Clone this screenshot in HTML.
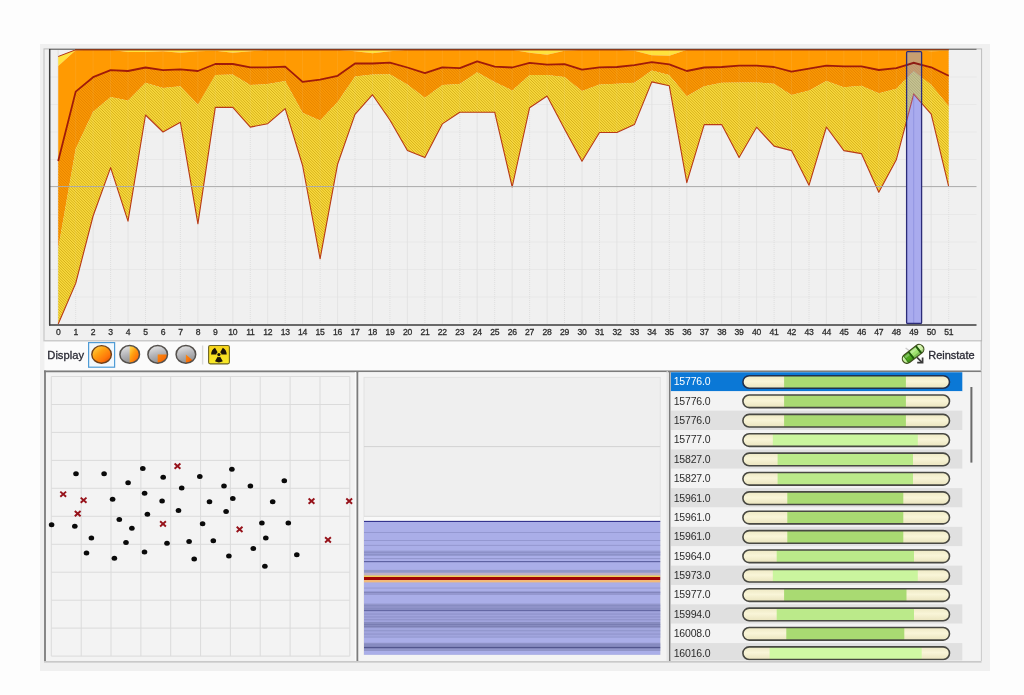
<!DOCTYPE html>
<html><head><meta charset="utf-8"><title>chart</title>
<style>
html,body{margin:0;padding:0;background:#fdfdfd;}
body{width:1024px;height:695px;overflow:hidden;position:relative;font-family:"Liberation Sans",sans-serif;}
svg{position:absolute;left:0;top:0;filter:blur(0.45px);}
text{font-family:"Liberation Sans",sans-serif;}
</style></head><body>
<svg width="1024" height="695" viewBox="0 0 1024 695">
<defs>
<pattern id="hy" width="2.4" height="2.4" patternUnits="userSpaceOnUse" patternTransform="rotate(-45)">
<rect width="2.4" height="2.4" fill="#f9de3a"/><rect width="1.15" height="2.4" fill="#d6b81e"/></pattern>
<pattern id="ho" width="2.4" height="2.4" patternUnits="userSpaceOnUse" patternTransform="rotate(-45)">
<rect width="2.4" height="2.4" fill="#fb9802"/><rect width="1.15" height="2.4" fill="#dc7a00"/></pattern>
<linearGradient id="gO" x1="0.1" y1="0.05" x2="0.9" y2="0.95"><stop offset="0" stop-color="#ffd44c"/><stop offset="0.38" stop-color="#ffa010"/><stop offset="0.72" stop-color="#ff780a"/><stop offset="1" stop-color="#e24c00"/></linearGradient>
<linearGradient id="gW" x1="0" y1="0" x2="1" y2="1"><stop offset="0" stop-color="#ff8a10"/><stop offset="1" stop-color="#f05a00"/></linearGradient>
<linearGradient id="gG" x1="0.3" y1="0" x2="0.6" y2="1"><stop offset="0" stop-color="#e6e6e6"/><stop offset="0.5" stop-color="#b4b4b8"/><stop offset="1" stop-color="#8c8c8c"/></linearGradient>
<linearGradient id="gP" x1="0" y1="0" x2="0" y2="1"><stop offset="0" stop-color="#eee9c4"/><stop offset="0.45" stop-color="#f9f5d8"/><stop offset="1" stop-color="#eae4be"/></linearGradient>
<linearGradient id="gY" x1="0" y1="0" x2="0" y2="1"><stop offset="0" stop-color="#f6d21a"/><stop offset="1" stop-color="#f8ea28"/></linearGradient>
<linearGradient id="gC" x1="0" y1="0" x2="0" y2="1"><stop offset="0" stop-color="#4f9a1e"/><stop offset="0.35" stop-color="#b6ec84"/><stop offset="0.6" stop-color="#58b01c"/><stop offset="1" stop-color="#3c8a10"/></linearGradient>
<clipPath id="cp"><rect x="50.3" y="50" width="926.5" height="274.4"/></clipPath><clipPath id="cb"><rect x="906.6" y="51.6" width="15" height="271.9"/></clipPath>
</defs>

<rect x="40" y="44" width="950" height="627" fill="#f0f0f0"/>
<rect x="44" y="48.9" width="937.6" height="292" fill="#f0f0f0" stroke="#bdbdbd" stroke-width="1"/>
<g><line x1="50" y1="77.0" x2="976.5" y2="77.0" stroke="#e6e6e6" stroke-width="0.9"/><line x1="50" y1="104.5" x2="976.5" y2="104.5" stroke="#e6e6e6" stroke-width="0.9"/><line x1="50" y1="132.0" x2="976.5" y2="132.0" stroke="#e6e6e6" stroke-width="0.9"/><line x1="50" y1="159.5" x2="976.5" y2="159.5" stroke="#e6e6e6" stroke-width="0.9"/><line x1="50" y1="214.5" x2="976.5" y2="214.5" stroke="#e6e6e6" stroke-width="0.9"/><line x1="50" y1="242.0" x2="976.5" y2="242.0" stroke="#e6e6e6" stroke-width="0.9"/><line x1="50" y1="269.5" x2="976.5" y2="269.5" stroke="#e6e6e6" stroke-width="0.9"/><line x1="50" y1="297.0" x2="976.5" y2="297.0" stroke="#e6e6e6" stroke-width="0.9"/><line x1="58.2" y1="50" x2="58.2" y2="324" stroke="#e0e0e0" stroke-width="0.8"/><line x1="75.7" y1="50" x2="75.7" y2="324" stroke="#d9d9d9" stroke-width="0.8" stroke-dasharray="1 1"/><line x1="93.1" y1="50" x2="93.1" y2="324" stroke="#e0e0e0" stroke-width="0.8"/><line x1="110.6" y1="50" x2="110.6" y2="324" stroke="#d9d9d9" stroke-width="0.8" stroke-dasharray="1 1"/><line x1="128.0" y1="50" x2="128.0" y2="324" stroke="#e0e0e0" stroke-width="0.8"/><line x1="145.5" y1="50" x2="145.5" y2="324" stroke="#d9d9d9" stroke-width="0.8" stroke-dasharray="1 1"/><line x1="163.0" y1="50" x2="163.0" y2="324" stroke="#e0e0e0" stroke-width="0.8"/><line x1="180.4" y1="50" x2="180.4" y2="324" stroke="#d9d9d9" stroke-width="0.8" stroke-dasharray="1 1"/><line x1="197.9" y1="50" x2="197.9" y2="324" stroke="#e0e0e0" stroke-width="0.8"/><line x1="215.3" y1="50" x2="215.3" y2="324" stroke="#d9d9d9" stroke-width="0.8" stroke-dasharray="1 1"/><line x1="232.8" y1="50" x2="232.8" y2="324" stroke="#e0e0e0" stroke-width="0.8"/><line x1="250.3" y1="50" x2="250.3" y2="324" stroke="#d9d9d9" stroke-width="0.8" stroke-dasharray="1 1"/><line x1="267.7" y1="50" x2="267.7" y2="324" stroke="#e0e0e0" stroke-width="0.8"/><line x1="285.2" y1="50" x2="285.2" y2="324" stroke="#d9d9d9" stroke-width="0.8" stroke-dasharray="1 1"/><line x1="302.6" y1="50" x2="302.6" y2="324" stroke="#e0e0e0" stroke-width="0.8"/><line x1="320.1" y1="50" x2="320.1" y2="324" stroke="#d9d9d9" stroke-width="0.8" stroke-dasharray="1 1"/><line x1="337.6" y1="50" x2="337.6" y2="324" stroke="#e0e0e0" stroke-width="0.8"/><line x1="355.0" y1="50" x2="355.0" y2="324" stroke="#d9d9d9" stroke-width="0.8" stroke-dasharray="1 1"/><line x1="372.5" y1="50" x2="372.5" y2="324" stroke="#e0e0e0" stroke-width="0.8"/><line x1="389.9" y1="50" x2="389.9" y2="324" stroke="#d9d9d9" stroke-width="0.8" stroke-dasharray="1 1"/><line x1="407.4" y1="50" x2="407.4" y2="324" stroke="#e0e0e0" stroke-width="0.8"/><line x1="424.9" y1="50" x2="424.9" y2="324" stroke="#d9d9d9" stroke-width="0.8" stroke-dasharray="1 1"/><line x1="442.3" y1="50" x2="442.3" y2="324" stroke="#e0e0e0" stroke-width="0.8"/><line x1="459.8" y1="50" x2="459.8" y2="324" stroke="#d9d9d9" stroke-width="0.8" stroke-dasharray="1 1"/><line x1="477.2" y1="50" x2="477.2" y2="324" stroke="#e0e0e0" stroke-width="0.8"/><line x1="494.7" y1="50" x2="494.7" y2="324" stroke="#d9d9d9" stroke-width="0.8" stroke-dasharray="1 1"/><line x1="512.2" y1="50" x2="512.2" y2="324" stroke="#e0e0e0" stroke-width="0.8"/><line x1="529.6" y1="50" x2="529.6" y2="324" stroke="#d9d9d9" stroke-width="0.8" stroke-dasharray="1 1"/><line x1="547.1" y1="50" x2="547.1" y2="324" stroke="#e0e0e0" stroke-width="0.8"/><line x1="564.5" y1="50" x2="564.5" y2="324" stroke="#d9d9d9" stroke-width="0.8" stroke-dasharray="1 1"/><line x1="582.0" y1="50" x2="582.0" y2="324" stroke="#e0e0e0" stroke-width="0.8"/><line x1="599.5" y1="50" x2="599.5" y2="324" stroke="#d9d9d9" stroke-width="0.8" stroke-dasharray="1 1"/><line x1="616.9" y1="50" x2="616.9" y2="324" stroke="#e0e0e0" stroke-width="0.8"/><line x1="634.4" y1="50" x2="634.4" y2="324" stroke="#d9d9d9" stroke-width="0.8" stroke-dasharray="1 1"/><line x1="651.8" y1="50" x2="651.8" y2="324" stroke="#e0e0e0" stroke-width="0.8"/><line x1="669.3" y1="50" x2="669.3" y2="324" stroke="#d9d9d9" stroke-width="0.8" stroke-dasharray="1 1"/><line x1="686.8" y1="50" x2="686.8" y2="324" stroke="#e0e0e0" stroke-width="0.8"/><line x1="704.2" y1="50" x2="704.2" y2="324" stroke="#d9d9d9" stroke-width="0.8" stroke-dasharray="1 1"/><line x1="721.7" y1="50" x2="721.7" y2="324" stroke="#e0e0e0" stroke-width="0.8"/><line x1="739.1" y1="50" x2="739.1" y2="324" stroke="#d9d9d9" stroke-width="0.8" stroke-dasharray="1 1"/><line x1="756.6" y1="50" x2="756.6" y2="324" stroke="#e0e0e0" stroke-width="0.8"/><line x1="774.1" y1="50" x2="774.1" y2="324" stroke="#d9d9d9" stroke-width="0.8" stroke-dasharray="1 1"/><line x1="791.5" y1="50" x2="791.5" y2="324" stroke="#e0e0e0" stroke-width="0.8"/><line x1="809.0" y1="50" x2="809.0" y2="324" stroke="#d9d9d9" stroke-width="0.8" stroke-dasharray="1 1"/><line x1="826.4" y1="50" x2="826.4" y2="324" stroke="#e0e0e0" stroke-width="0.8"/><line x1="843.9" y1="50" x2="843.9" y2="324" stroke="#d9d9d9" stroke-width="0.8" stroke-dasharray="1 1"/><line x1="861.4" y1="50" x2="861.4" y2="324" stroke="#e0e0e0" stroke-width="0.8"/><line x1="878.8" y1="50" x2="878.8" y2="324" stroke="#d9d9d9" stroke-width="0.8" stroke-dasharray="1 1"/><line x1="896.3" y1="50" x2="896.3" y2="324" stroke="#e0e0e0" stroke-width="0.8"/><line x1="913.7" y1="50" x2="913.7" y2="324" stroke="#d9d9d9" stroke-width="0.8" stroke-dasharray="1 1"/><line x1="931.2" y1="50" x2="931.2" y2="324" stroke="#e0e0e0" stroke-width="0.8"/><line x1="948.7" y1="50" x2="948.7" y2="324" stroke="#d9d9d9" stroke-width="0.8" stroke-dasharray="1 1"/></g>
<g clip-path="url(#cp)">
<polygon points="58.2,56.5 75.7,49.8 93.1,49.8 110.6,49.8 128.0,49.8 145.5,49.8 163.0,49.8 180.4,49.8 197.9,49.8 215.3,49.8 232.8,49.8 250.3,49.8 267.7,49.8 285.2,49.8 302.6,49.8 320.1,49.8 337.6,49.8 355.0,49.8 372.5,49.8 389.9,49.8 407.4,49.8 424.9,49.8 442.3,49.8 459.8,49.8 477.2,49.8 494.7,49.8 512.2,49.8 529.6,49.8 547.1,49.8 564.5,49.8 582.0,49.8 599.5,49.8 616.9,49.8 634.4,49.8 651.8,49.8 669.3,49.8 686.8,49.8 704.2,49.8 721.7,49.8 739.1,49.8 756.6,49.8 774.1,49.8 791.5,49.8 809.0,49.8 826.4,49.8 843.9,49.8 861.4,49.8 878.8,49.8 896.3,49.8 913.7,49.8 931.2,49.8 948.7,49.8 948.7,50.8 931.2,51.2 913.7,50.3 896.3,49.8 878.8,49.8 861.4,49.8 843.9,49.8 826.4,49.8 809.0,49.8 791.5,49.8 774.1,49.8 756.6,49.8 739.1,49.8 721.7,49.8 704.2,49.8 686.8,49.8 669.3,55.8 651.8,55.3 634.4,50.8 616.9,49.8 599.5,49.8 582.0,49.8 564.5,50.8 547.1,54.8 529.6,52.8 512.2,49.8 494.7,49.8 477.2,49.8 459.8,49.8 442.3,49.8 424.9,49.8 407.4,49.8 389.9,51.3 372.5,53.3 355.0,51.3 337.6,49.8 320.1,49.8 302.6,49.8 285.2,49.8 267.7,49.8 250.3,51.3 232.8,52.8 215.3,50.8 197.9,51.3 180.4,52.8 163.0,51.3 145.5,52.1 128.0,52.1 110.6,49.8 93.1,49.8 75.7,50.2 58.2,66.0" fill="#ffe23c"/>
<polygon points="58.2,66.0 75.7,50.2 93.1,49.8 110.6,49.8 128.0,52.1 145.5,52.1 163.0,51.3 180.4,52.8 197.9,51.3 215.3,50.8 232.8,52.8 250.3,51.3 267.7,49.8 285.2,49.8 302.6,49.8 320.1,49.8 337.6,49.8 355.0,51.3 372.5,53.3 389.9,51.3 407.4,49.8 424.9,49.8 442.3,49.8 459.8,49.8 477.2,49.8 494.7,49.8 512.2,49.8 529.6,52.8 547.1,54.8 564.5,50.8 582.0,49.8 599.5,49.8 616.9,49.8 634.4,50.8 651.8,55.3 669.3,55.8 686.8,49.8 704.2,49.8 721.7,49.8 739.1,49.8 756.6,49.8 774.1,49.8 791.5,49.8 809.0,49.8 826.4,49.8 843.9,49.8 861.4,49.8 878.8,49.8 896.3,49.8 913.7,50.3 931.2,51.2 948.7,50.8 948.7,75.8 931.2,67.3 913.7,62.8 896.3,68.2 878.8,70.0 861.4,66.4 843.9,66.4 826.4,65.7 809.0,68.7 791.5,71.7 774.1,67.0 756.6,65.7 739.1,65.7 721.7,67.0 704.2,67.5 686.8,71.0 669.3,64.3 651.8,62.2 634.4,65.2 616.9,67.0 599.5,67.3 582.0,69.6 564.5,64.2 547.1,64.7 529.6,62.9 512.2,67.5 494.7,66.6 477.2,61.3 459.8,68.2 442.3,67.3 424.9,73.1 407.4,67.5 389.9,62.6 372.5,63.5 355.0,63.5 337.6,75.8 320.1,79.6 302.6,81.9 285.2,66.6 267.7,67.3 250.3,67.3 232.8,64.0 215.3,64.0 197.9,71.0 180.4,69.3 163.0,70.1 145.5,67.5 128.0,71.0 110.6,70.1 93.1,77.2 75.7,91.6 58.2,161.0" fill="#ff9a02"/>
<polygon points="58.2,161.0 75.7,91.6 93.1,77.2 110.6,70.1 128.0,71.0 145.5,67.5 163.0,70.1 180.4,69.3 197.9,71.0 215.3,64.0 232.8,64.0 250.3,67.3 267.7,67.3 285.2,66.6 302.6,81.9 320.1,79.6 337.6,75.8 355.0,63.5 372.5,63.5 389.9,62.6 407.4,67.5 424.9,73.1 442.3,67.3 459.8,68.2 477.2,61.3 494.7,66.6 512.2,67.5 529.6,62.9 547.1,64.7 564.5,64.2 582.0,69.6 599.5,67.3 616.9,67.0 634.4,65.2 651.8,62.2 669.3,64.3 686.8,71.0 704.2,67.5 721.7,67.0 739.1,65.7 756.6,65.7 774.1,67.0 791.5,71.7 809.0,68.7 826.4,65.7 843.9,66.4 861.4,66.4 878.8,70.0 896.3,68.2 913.7,62.8 931.2,67.3 948.7,75.8 948.7,106.3 931.2,84.7 913.7,71.3 896.3,88.7 878.8,93.3 861.4,85.8 843.9,87.2 826.4,81.0 809.0,90.4 791.5,95.1 774.1,83.7 756.6,82.4 739.1,82.4 721.7,82.8 704.2,86.3 686.8,96.3 669.3,74.9 651.8,70.5 634.4,82.8 616.9,83.7 599.5,84.5 582.0,91.1 564.5,76.9 547.1,74.9 529.6,74.9 512.2,90.4 494.7,81.9 477.2,72.2 459.8,84.0 442.3,85.1 424.9,97.7 407.4,84.5 389.9,74.2 372.5,74.5 355.0,76.6 337.6,102.1 320.1,120.6 302.6,112.7 285.2,81.0 267.7,84.0 250.3,85.1 232.8,74.5 215.3,74.9 197.9,104.8 180.4,86.3 163.0,88.1 145.5,82.8 128.0,100.4 110.6,96.9 93.1,111.8 75.7,148.7 58.2,248.4" fill="#fb9904"/>
<polygon points="58.2,248.4 75.7,148.7 93.1,111.8 110.6,96.9 128.0,100.4 145.5,82.8 163.0,88.1 180.4,86.3 197.9,104.8 215.3,74.9 232.8,74.5 250.3,85.1 267.7,84.0 285.2,81.0 302.6,112.7 320.1,120.6 337.6,102.1 355.0,76.6 372.5,74.5 389.9,74.2 407.4,84.5 424.9,97.7 442.3,85.1 459.8,84.0 477.2,72.2 494.7,81.9 512.2,90.4 529.6,74.9 547.1,74.9 564.5,76.9 582.0,91.1 599.5,84.5 616.9,83.7 634.4,82.8 651.8,70.5 669.3,74.9 686.8,96.3 704.2,86.3 721.7,82.8 739.1,82.4 756.6,82.4 774.1,83.7 791.5,95.1 809.0,90.4 826.4,81.0 843.9,87.2 861.4,85.8 878.8,93.3 896.3,88.7 913.7,71.3 931.2,84.7 948.7,106.3 948.7,186.6 931.2,114.1 913.7,94.1 896.3,159.8 878.8,192.3 861.4,153.6 843.9,150.6 826.4,127.0 809.0,185.3 791.5,150.6 774.1,146.1 756.6,127.2 739.1,157.5 721.7,124.6 704.2,124.6 686.8,182.6 669.3,85.8 651.8,81.9 634.4,124.6 616.9,132.5 599.5,132.5 582.0,161.3 564.5,129.0 547.1,96.0 529.6,107.7 512.2,187.0 494.7,112.2 477.2,112.2 459.8,112.2 442.3,123.9 424.9,157.6 407.4,150.4 389.9,120.0 372.5,94.7 355.0,114.4 337.6,164.2 320.1,258.8 302.6,165.5 285.2,108.6 267.7,123.7 250.3,127.1 232.8,107.4 215.3,107.4 197.9,223.8 180.4,122.3 163.0,132.0 145.5,115.0 128.0,221.2 110.6,167.6 93.1,216.0 75.7,283.4 58.2,324.0" fill="#f9da3e"/>
<clipPath id="cy"><polygon points="58.2,248.4 75.7,148.7 93.1,111.8 110.6,96.9 128.0,100.4 145.5,82.8 163.0,88.1 180.4,86.3 197.9,104.8 215.3,74.9 232.8,74.5 250.3,85.1 267.7,84.0 285.2,81.0 302.6,112.7 320.1,120.6 337.6,102.1 355.0,76.6 372.5,74.5 389.9,74.2 407.4,84.5 424.9,97.7 442.3,85.1 459.8,84.0 477.2,72.2 494.7,81.9 512.2,90.4 529.6,74.9 547.1,74.9 564.5,76.9 582.0,91.1 599.5,84.5 616.9,83.7 634.4,82.8 651.8,70.5 669.3,74.9 686.8,96.3 704.2,86.3 721.7,82.8 739.1,82.4 756.6,82.4 774.1,83.7 791.5,95.1 809.0,90.4 826.4,81.0 843.9,87.2 861.4,85.8 878.8,93.3 896.3,88.7 913.7,71.3 931.2,84.7 948.7,106.3 948.7,186.6 931.2,114.1 913.7,94.1 896.3,159.8 878.8,192.3 861.4,153.6 843.9,150.6 826.4,127.0 809.0,185.3 791.5,150.6 774.1,146.1 756.6,127.2 739.1,157.5 721.7,124.6 704.2,124.6 686.8,182.6 669.3,85.8 651.8,81.9 634.4,124.6 616.9,132.5 599.5,132.5 582.0,161.3 564.5,129.0 547.1,96.0 529.6,107.7 512.2,187.0 494.7,112.2 477.2,112.2 459.8,112.2 442.3,123.9 424.9,157.6 407.4,150.4 389.9,120.0 372.5,94.7 355.0,114.4 337.6,164.2 320.1,258.8 302.6,165.5 285.2,108.6 267.7,123.7 250.3,127.1 232.8,107.4 215.3,107.4 197.9,223.8 180.4,122.3 163.0,132.0 145.5,115.0 128.0,221.2 110.6,167.6 93.1,216.0 75.7,283.4 58.2,324.0"/></clipPath><clipPath id="co"><polygon points="58.2,161.0 75.7,91.6 93.1,77.2 110.6,70.1 128.0,71.0 145.5,67.5 163.0,70.1 180.4,69.3 197.9,71.0 215.3,64.0 232.8,64.0 250.3,67.3 267.7,67.3 285.2,66.6 302.6,81.9 320.1,79.6 337.6,75.8 355.0,63.5 372.5,63.5 389.9,62.6 407.4,67.5 424.9,73.1 442.3,67.3 459.8,68.2 477.2,61.3 494.7,66.6 512.2,67.5 529.6,62.9 547.1,64.7 564.5,64.2 582.0,69.6 599.5,67.3 616.9,67.0 634.4,65.2 651.8,62.2 669.3,64.3 686.8,71.0 704.2,67.5 721.7,67.0 739.1,65.7 756.6,65.7 774.1,67.0 791.5,71.7 809.0,68.7 826.4,65.7 843.9,66.4 861.4,66.4 878.8,70.0 896.3,68.2 913.7,62.8 931.2,67.3 948.7,75.8 948.7,106.3 931.2,84.7 913.7,71.3 896.3,88.7 878.8,93.3 861.4,85.8 843.9,87.2 826.4,81.0 809.0,90.4 791.5,95.1 774.1,83.7 756.6,82.4 739.1,82.4 721.7,82.8 704.2,86.3 686.8,96.3 669.3,74.9 651.8,70.5 634.4,82.8 616.9,83.7 599.5,84.5 582.0,91.1 564.5,76.9 547.1,74.9 529.6,74.9 512.2,90.4 494.7,81.9 477.2,72.2 459.8,84.0 442.3,85.1 424.9,97.7 407.4,84.5 389.9,74.2 372.5,74.5 355.0,76.6 337.6,102.1 320.1,120.6 302.6,112.7 285.2,81.0 267.7,84.0 250.3,85.1 232.8,74.5 215.3,74.9 197.9,104.8 180.4,86.3 163.0,88.1 145.5,82.8 128.0,100.4 110.6,96.9 93.1,111.8 75.7,148.7 58.2,248.4"/></clipPath><path d="M-230.00 48l280 280M-227.30 48l280 280M-224.60 48l280 280M-221.90 48l280 280M-219.20 48l280 280M-216.50 48l280 280M-213.80 48l280 280M-211.10 48l280 280M-208.40 48l280 280M-205.70 48l280 280M-203.00 48l280 280M-200.30 48l280 280M-197.60 48l280 280M-194.90 48l280 280M-192.20 48l280 280M-189.50 48l280 280M-186.80 48l280 280M-184.10 48l280 280M-181.40 48l280 280M-178.70 48l280 280M-176.00 48l280 280M-173.30 48l280 280M-170.60 48l280 280M-167.90 48l280 280M-165.20 48l280 280M-162.50 48l280 280M-159.80 48l280 280M-157.10 48l280 280M-154.40 48l280 280M-151.70 48l280 280M-149.00 48l280 280M-146.30 48l280 280M-143.60 48l280 280M-140.90 48l280 280M-138.20 48l280 280M-135.50 48l280 280M-132.80 48l280 280M-130.10 48l280 280M-127.40 48l280 280M-124.70 48l280 280M-122.00 48l280 280M-119.30 48l280 280M-116.60 48l280 280M-113.90 48l280 280M-111.20 48l280 280M-108.50 48l280 280M-105.80 48l280 280M-103.10 48l280 280M-100.40 48l280 280M-97.70 48l280 280M-95.00 48l280 280M-92.30 48l280 280M-89.60 48l280 280M-86.90 48l280 280M-84.20 48l280 280M-81.50 48l280 280M-78.80 48l280 280M-76.10 48l280 280M-73.40 48l280 280M-70.70 48l280 280M-68.00 48l280 280M-65.30 48l280 280M-62.60 48l280 280M-59.90 48l280 280M-57.20 48l280 280M-54.50 48l280 280M-51.80 48l280 280M-49.10 48l280 280M-46.40 48l280 280M-43.70 48l280 280M-41.00 48l280 280M-38.30 48l280 280M-35.60 48l280 280M-32.90 48l280 280M-30.20 48l280 280M-27.50 48l280 280M-24.80 48l280 280M-22.10 48l280 280M-19.40 48l280 280M-16.70 48l280 280M-14.00 48l280 280M-11.30 48l280 280M-8.60 48l280 280M-5.90 48l280 280M-3.20 48l280 280M-0.50 48l280 280M2.20 48l280 280M4.90 48l280 280M7.60 48l280 280M10.30 48l280 280M13.00 48l280 280M15.70 48l280 280M18.40 48l280 280M21.10 48l280 280M23.80 48l280 280M26.50 48l280 280M29.20 48l280 280M31.90 48l280 280M34.60 48l280 280M37.30 48l280 280M40.00 48l280 280M42.70 48l280 280M45.40 48l280 280M48.10 48l280 280M50.80 48l280 280M53.50 48l280 280M56.20 48l280 280M58.90 48l280 280M61.60 48l280 280M64.30 48l280 280M67.00 48l280 280M69.70 48l280 280M72.40 48l280 280M75.10 48l280 280M77.80 48l280 280M80.50 48l280 280M83.20 48l280 280M85.90 48l280 280M88.60 48l280 280M91.30 48l280 280M94.00 48l280 280M96.70 48l280 280M99.40 48l280 280M102.10 48l280 280M104.80 48l280 280M107.50 48l280 280M110.20 48l280 280M112.90 48l280 280M115.60 48l280 280M118.30 48l280 280M121.00 48l280 280M123.70 48l280 280M126.40 48l280 280M129.10 48l280 280M131.80 48l280 280M134.50 48l280 280M137.20 48l280 280M139.90 48l280 280M142.60 48l280 280M145.30 48l280 280M148.00 48l280 280M150.70 48l280 280M153.40 48l280 280M156.10 48l280 280M158.80 48l280 280M161.50 48l280 280M164.20 48l280 280M166.90 48l280 280M169.60 48l280 280M172.30 48l280 280M175.00 48l280 280M177.70 48l280 280M180.40 48l280 280M183.10 48l280 280M185.80 48l280 280M188.50 48l280 280M191.20 48l280 280M193.90 48l280 280M196.60 48l280 280M199.30 48l280 280M202.00 48l280 280M204.70 48l280 280M207.40 48l280 280M210.10 48l280 280M212.80 48l280 280M215.50 48l280 280M218.20 48l280 280M220.90 48l280 280M223.60 48l280 280M226.30 48l280 280M229.00 48l280 280M231.70 48l280 280M234.40 48l280 280M237.10 48l280 280M239.80 48l280 280M242.50 48l280 280M245.20 48l280 280M247.90 48l280 280M250.60 48l280 280M253.30 48l280 280M256.00 48l280 280M258.70 48l280 280M261.40 48l280 280M264.10 48l280 280M266.80 48l280 280M269.50 48l280 280M272.20 48l280 280M274.90 48l280 280M277.60 48l280 280M280.30 48l280 280M283.00 48l280 280M285.70 48l280 280M288.40 48l280 280M291.10 48l280 280M293.80 48l280 280M296.50 48l280 280M299.20 48l280 280M301.90 48l280 280M304.60 48l280 280M307.30 48l280 280M310.00 48l280 280M312.70 48l280 280M315.40 48l280 280M318.10 48l280 280M320.80 48l280 280M323.50 48l280 280M326.20 48l280 280M328.90 48l280 280M331.60 48l280 280M334.30 48l280 280M337.00 48l280 280M339.70 48l280 280M342.40 48l280 280M345.10 48l280 280M347.80 48l280 280M350.50 48l280 280M353.20 48l280 280M355.90 48l280 280M358.60 48l280 280M361.30 48l280 280M364.00 48l280 280M366.70 48l280 280M369.40 48l280 280M372.10 48l280 280M374.80 48l280 280M377.50 48l280 280M380.20 48l280 280M382.90 48l280 280M385.60 48l280 280M388.30 48l280 280M391.00 48l280 280M393.70 48l280 280M396.40 48l280 280M399.10 48l280 280M401.80 48l280 280M404.50 48l280 280M407.20 48l280 280M409.90 48l280 280M412.60 48l280 280M415.30 48l280 280M418.00 48l280 280M420.70 48l280 280M423.40 48l280 280M426.10 48l280 280M428.80 48l280 280M431.50 48l280 280M434.20 48l280 280M436.90 48l280 280M439.60 48l280 280M442.30 48l280 280M445.00 48l280 280M447.70 48l280 280M450.40 48l280 280M453.10 48l280 280M455.80 48l280 280M458.50 48l280 280M461.20 48l280 280M463.90 48l280 280M466.60 48l280 280M469.30 48l280 280M472.00 48l280 280M474.70 48l280 280M477.40 48l280 280M480.10 48l280 280M482.80 48l280 280M485.50 48l280 280M488.20 48l280 280M490.90 48l280 280M493.60 48l280 280M496.30 48l280 280M499.00 48l280 280M501.70 48l280 280M504.40 48l280 280M507.10 48l280 280M509.80 48l280 280M512.50 48l280 280M515.20 48l280 280M517.90 48l280 280M520.60 48l280 280M523.30 48l280 280M526.00 48l280 280M528.70 48l280 280M531.40 48l280 280M534.10 48l280 280M536.80 48l280 280M539.50 48l280 280M542.20 48l280 280M544.90 48l280 280M547.60 48l280 280M550.30 48l280 280M553.00 48l280 280M555.70 48l280 280M558.40 48l280 280M561.10 48l280 280M563.80 48l280 280M566.50 48l280 280M569.20 48l280 280M571.90 48l280 280M574.60 48l280 280M577.30 48l280 280M580.00 48l280 280M582.70 48l280 280M585.40 48l280 280M588.10 48l280 280M590.80 48l280 280M593.50 48l280 280M596.20 48l280 280M598.90 48l280 280M601.60 48l280 280M604.30 48l280 280M607.00 48l280 280M609.70 48l280 280M612.40 48l280 280M615.10 48l280 280M617.80 48l280 280M620.50 48l280 280M623.20 48l280 280M625.90 48l280 280M628.60 48l280 280M631.30 48l280 280M634.00 48l280 280M636.70 48l280 280M639.40 48l280 280M642.10 48l280 280M644.80 48l280 280M647.50 48l280 280M650.20 48l280 280M652.90 48l280 280M655.60 48l280 280M658.30 48l280 280M661.00 48l280 280M663.70 48l280 280M666.40 48l280 280M669.10 48l280 280M671.80 48l280 280M674.50 48l280 280M677.20 48l280 280M679.90 48l280 280M682.60 48l280 280M685.30 48l280 280M688.00 48l280 280M690.70 48l280 280M693.40 48l280 280M696.10 48l280 280M698.80 48l280 280M701.50 48l280 280M704.20 48l280 280M706.90 48l280 280M709.60 48l280 280M712.30 48l280 280M715.00 48l280 280M717.70 48l280 280M720.40 48l280 280M723.10 48l280 280M725.80 48l280 280M728.50 48l280 280M731.20 48l280 280M733.90 48l280 280M736.60 48l280 280M739.30 48l280 280M742.00 48l280 280M744.70 48l280 280M747.40 48l280 280M750.10 48l280 280M752.80 48l280 280M755.50 48l280 280M758.20 48l280 280M760.90 48l280 280M763.60 48l280 280M766.30 48l280 280M769.00 48l280 280M771.70 48l280 280M774.40 48l280 280M777.10 48l280 280M779.80 48l280 280M782.50 48l280 280M785.20 48l280 280M787.90 48l280 280M790.60 48l280 280M793.30 48l280 280M796.00 48l280 280M798.70 48l280 280M801.40 48l280 280M804.10 48l280 280M806.80 48l280 280M809.50 48l280 280M812.20 48l280 280M814.90 48l280 280M817.60 48l280 280M820.30 48l280 280M823.00 48l280 280M825.70 48l280 280M828.40 48l280 280M831.10 48l280 280M833.80 48l280 280M836.50 48l280 280M839.20 48l280 280M841.90 48l280 280M844.60 48l280 280M847.30 48l280 280M850.00 48l280 280M852.70 48l280 280M855.40 48l280 280M858.10 48l280 280M860.80 48l280 280M863.50 48l280 280M866.20 48l280 280M868.90 48l280 280M871.60 48l280 280M874.30 48l280 280M877.00 48l280 280M879.70 48l280 280M882.40 48l280 280M885.10 48l280 280M887.80 48l280 280M890.50 48l280 280M893.20 48l280 280M895.90 48l280 280M898.60 48l280 280M901.30 48l280 280M904.00 48l280 280M906.70 48l280 280M909.40 48l280 280M912.10 48l280 280M914.80 48l280 280M917.50 48l280 280M920.20 48l280 280M922.90 48l280 280M925.60 48l280 280M928.30 48l280 280M931.00 48l280 280M933.70 48l280 280M936.40 48l280 280M939.10 48l280 280M941.80 48l280 280M944.50 48l280 280M947.20 48l280 280M949.90 48l280 280M952.60 48l280 280M955.30 48l280 280M958.00 48l280 280M960.70 48l280 280M963.40 48l280 280M966.10 48l280 280M968.80 48l280 280M971.50 48l280 280M974.20 48l280 280M976.90 48l280 280M979.60 48l280 280" stroke="#d4ae1a" stroke-width="1.0" fill="none" clip-path="url(#cy)"/><path d="M-230.00 48l280 280M-227.30 48l280 280M-224.60 48l280 280M-221.90 48l280 280M-219.20 48l280 280M-216.50 48l280 280M-213.80 48l280 280M-211.10 48l280 280M-208.40 48l280 280M-205.70 48l280 280M-203.00 48l280 280M-200.30 48l280 280M-197.60 48l280 280M-194.90 48l280 280M-192.20 48l280 280M-189.50 48l280 280M-186.80 48l280 280M-184.10 48l280 280M-181.40 48l280 280M-178.70 48l280 280M-176.00 48l280 280M-173.30 48l280 280M-170.60 48l280 280M-167.90 48l280 280M-165.20 48l280 280M-162.50 48l280 280M-159.80 48l280 280M-157.10 48l280 280M-154.40 48l280 280M-151.70 48l280 280M-149.00 48l280 280M-146.30 48l280 280M-143.60 48l280 280M-140.90 48l280 280M-138.20 48l280 280M-135.50 48l280 280M-132.80 48l280 280M-130.10 48l280 280M-127.40 48l280 280M-124.70 48l280 280M-122.00 48l280 280M-119.30 48l280 280M-116.60 48l280 280M-113.90 48l280 280M-111.20 48l280 280M-108.50 48l280 280M-105.80 48l280 280M-103.10 48l280 280M-100.40 48l280 280M-97.70 48l280 280M-95.00 48l280 280M-92.30 48l280 280M-89.60 48l280 280M-86.90 48l280 280M-84.20 48l280 280M-81.50 48l280 280M-78.80 48l280 280M-76.10 48l280 280M-73.40 48l280 280M-70.70 48l280 280M-68.00 48l280 280M-65.30 48l280 280M-62.60 48l280 280M-59.90 48l280 280M-57.20 48l280 280M-54.50 48l280 280M-51.80 48l280 280M-49.10 48l280 280M-46.40 48l280 280M-43.70 48l280 280M-41.00 48l280 280M-38.30 48l280 280M-35.60 48l280 280M-32.90 48l280 280M-30.20 48l280 280M-27.50 48l280 280M-24.80 48l280 280M-22.10 48l280 280M-19.40 48l280 280M-16.70 48l280 280M-14.00 48l280 280M-11.30 48l280 280M-8.60 48l280 280M-5.90 48l280 280M-3.20 48l280 280M-0.50 48l280 280M2.20 48l280 280M4.90 48l280 280M7.60 48l280 280M10.30 48l280 280M13.00 48l280 280M15.70 48l280 280M18.40 48l280 280M21.10 48l280 280M23.80 48l280 280M26.50 48l280 280M29.20 48l280 280M31.90 48l280 280M34.60 48l280 280M37.30 48l280 280M40.00 48l280 280M42.70 48l280 280M45.40 48l280 280M48.10 48l280 280M50.80 48l280 280M53.50 48l280 280M56.20 48l280 280M58.90 48l280 280M61.60 48l280 280M64.30 48l280 280M67.00 48l280 280M69.70 48l280 280M72.40 48l280 280M75.10 48l280 280M77.80 48l280 280M80.50 48l280 280M83.20 48l280 280M85.90 48l280 280M88.60 48l280 280M91.30 48l280 280M94.00 48l280 280M96.70 48l280 280M99.40 48l280 280M102.10 48l280 280M104.80 48l280 280M107.50 48l280 280M110.20 48l280 280M112.90 48l280 280M115.60 48l280 280M118.30 48l280 280M121.00 48l280 280M123.70 48l280 280M126.40 48l280 280M129.10 48l280 280M131.80 48l280 280M134.50 48l280 280M137.20 48l280 280M139.90 48l280 280M142.60 48l280 280M145.30 48l280 280M148.00 48l280 280M150.70 48l280 280M153.40 48l280 280M156.10 48l280 280M158.80 48l280 280M161.50 48l280 280M164.20 48l280 280M166.90 48l280 280M169.60 48l280 280M172.30 48l280 280M175.00 48l280 280M177.70 48l280 280M180.40 48l280 280M183.10 48l280 280M185.80 48l280 280M188.50 48l280 280M191.20 48l280 280M193.90 48l280 280M196.60 48l280 280M199.30 48l280 280M202.00 48l280 280M204.70 48l280 280M207.40 48l280 280M210.10 48l280 280M212.80 48l280 280M215.50 48l280 280M218.20 48l280 280M220.90 48l280 280M223.60 48l280 280M226.30 48l280 280M229.00 48l280 280M231.70 48l280 280M234.40 48l280 280M237.10 48l280 280M239.80 48l280 280M242.50 48l280 280M245.20 48l280 280M247.90 48l280 280M250.60 48l280 280M253.30 48l280 280M256.00 48l280 280M258.70 48l280 280M261.40 48l280 280M264.10 48l280 280M266.80 48l280 280M269.50 48l280 280M272.20 48l280 280M274.90 48l280 280M277.60 48l280 280M280.30 48l280 280M283.00 48l280 280M285.70 48l280 280M288.40 48l280 280M291.10 48l280 280M293.80 48l280 280M296.50 48l280 280M299.20 48l280 280M301.90 48l280 280M304.60 48l280 280M307.30 48l280 280M310.00 48l280 280M312.70 48l280 280M315.40 48l280 280M318.10 48l280 280M320.80 48l280 280M323.50 48l280 280M326.20 48l280 280M328.90 48l280 280M331.60 48l280 280M334.30 48l280 280M337.00 48l280 280M339.70 48l280 280M342.40 48l280 280M345.10 48l280 280M347.80 48l280 280M350.50 48l280 280M353.20 48l280 280M355.90 48l280 280M358.60 48l280 280M361.30 48l280 280M364.00 48l280 280M366.70 48l280 280M369.40 48l280 280M372.10 48l280 280M374.80 48l280 280M377.50 48l280 280M380.20 48l280 280M382.90 48l280 280M385.60 48l280 280M388.30 48l280 280M391.00 48l280 280M393.70 48l280 280M396.40 48l280 280M399.10 48l280 280M401.80 48l280 280M404.50 48l280 280M407.20 48l280 280M409.90 48l280 280M412.60 48l280 280M415.30 48l280 280M418.00 48l280 280M420.70 48l280 280M423.40 48l280 280M426.10 48l280 280M428.80 48l280 280M431.50 48l280 280M434.20 48l280 280M436.90 48l280 280M439.60 48l280 280M442.30 48l280 280M445.00 48l280 280M447.70 48l280 280M450.40 48l280 280M453.10 48l280 280M455.80 48l280 280M458.50 48l280 280M461.20 48l280 280M463.90 48l280 280M466.60 48l280 280M469.30 48l280 280M472.00 48l280 280M474.70 48l280 280M477.40 48l280 280M480.10 48l280 280M482.80 48l280 280M485.50 48l280 280M488.20 48l280 280M490.90 48l280 280M493.60 48l280 280M496.30 48l280 280M499.00 48l280 280M501.70 48l280 280M504.40 48l280 280M507.10 48l280 280M509.80 48l280 280M512.50 48l280 280M515.20 48l280 280M517.90 48l280 280M520.60 48l280 280M523.30 48l280 280M526.00 48l280 280M528.70 48l280 280M531.40 48l280 280M534.10 48l280 280M536.80 48l280 280M539.50 48l280 280M542.20 48l280 280M544.90 48l280 280M547.60 48l280 280M550.30 48l280 280M553.00 48l280 280M555.70 48l280 280M558.40 48l280 280M561.10 48l280 280M563.80 48l280 280M566.50 48l280 280M569.20 48l280 280M571.90 48l280 280M574.60 48l280 280M577.30 48l280 280M580.00 48l280 280M582.70 48l280 280M585.40 48l280 280M588.10 48l280 280M590.80 48l280 280M593.50 48l280 280M596.20 48l280 280M598.90 48l280 280M601.60 48l280 280M604.30 48l280 280M607.00 48l280 280M609.70 48l280 280M612.40 48l280 280M615.10 48l280 280M617.80 48l280 280M620.50 48l280 280M623.20 48l280 280M625.90 48l280 280M628.60 48l280 280M631.30 48l280 280M634.00 48l280 280M636.70 48l280 280M639.40 48l280 280M642.10 48l280 280M644.80 48l280 280M647.50 48l280 280M650.20 48l280 280M652.90 48l280 280M655.60 48l280 280M658.30 48l280 280M661.00 48l280 280M663.70 48l280 280M666.40 48l280 280M669.10 48l280 280M671.80 48l280 280M674.50 48l280 280M677.20 48l280 280M679.90 48l280 280M682.60 48l280 280M685.30 48l280 280M688.00 48l280 280M690.70 48l280 280M693.40 48l280 280M696.10 48l280 280M698.80 48l280 280M701.50 48l280 280M704.20 48l280 280M706.90 48l280 280M709.60 48l280 280M712.30 48l280 280M715.00 48l280 280M717.70 48l280 280M720.40 48l280 280M723.10 48l280 280M725.80 48l280 280M728.50 48l280 280M731.20 48l280 280M733.90 48l280 280M736.60 48l280 280M739.30 48l280 280M742.00 48l280 280M744.70 48l280 280M747.40 48l280 280M750.10 48l280 280M752.80 48l280 280M755.50 48l280 280M758.20 48l280 280M760.90 48l280 280M763.60 48l280 280M766.30 48l280 280M769.00 48l280 280M771.70 48l280 280M774.40 48l280 280M777.10 48l280 280M779.80 48l280 280M782.50 48l280 280M785.20 48l280 280M787.90 48l280 280M790.60 48l280 280M793.30 48l280 280M796.00 48l280 280M798.70 48l280 280M801.40 48l280 280M804.10 48l280 280M806.80 48l280 280M809.50 48l280 280M812.20 48l280 280M814.90 48l280 280M817.60 48l280 280M820.30 48l280 280M823.00 48l280 280M825.70 48l280 280M828.40 48l280 280M831.10 48l280 280M833.80 48l280 280M836.50 48l280 280M839.20 48l280 280M841.90 48l280 280M844.60 48l280 280M847.30 48l280 280M850.00 48l280 280M852.70 48l280 280M855.40 48l280 280M858.10 48l280 280M860.80 48l280 280M863.50 48l280 280M866.20 48l280 280M868.90 48l280 280M871.60 48l280 280M874.30 48l280 280M877.00 48l280 280M879.70 48l280 280M882.40 48l280 280M885.10 48l280 280M887.80 48l280 280M890.50 48l280 280M893.20 48l280 280M895.90 48l280 280M898.60 48l280 280M901.30 48l280 280M904.00 48l280 280M906.70 48l280 280M909.40 48l280 280M912.10 48l280 280M914.80 48l280 280M917.50 48l280 280M920.20 48l280 280M922.90 48l280 280M925.60 48l280 280M928.30 48l280 280M931.00 48l280 280M933.70 48l280 280M936.40 48l280 280M939.10 48l280 280M941.80 48l280 280M944.50 48l280 280M947.20 48l280 280M949.90 48l280 280M952.60 48l280 280M955.30 48l280 280M958.00 48l280 280M960.70 48l280 280M963.40 48l280 280M966.10 48l280 280M968.80 48l280 280M971.50 48l280 280M974.20 48l280 280M976.90 48l280 280M979.60 48l280 280" stroke="#e58200" stroke-width="1.0" fill="none" clip-path="url(#co)"/>
<line x1="58.2" y1="50" x2="58.2" y2="324.0" stroke="#e8e0c8" stroke-opacity="0.10" stroke-width="1"/>
<line x1="75.7" y1="50" x2="75.7" y2="283.4" stroke="#e8e0c8" stroke-opacity="0.10" stroke-width="1"/>
<line x1="93.1" y1="50" x2="93.1" y2="216.0" stroke="#e8e0c8" stroke-opacity="0.10" stroke-width="1"/>
<line x1="110.6" y1="50" x2="110.6" y2="167.6" stroke="#e8e0c8" stroke-opacity="0.10" stroke-width="1"/>
<line x1="128.0" y1="50" x2="128.0" y2="221.2" stroke="#e8e0c8" stroke-opacity="0.10" stroke-width="1"/>
<line x1="145.5" y1="50" x2="145.5" y2="115.0" stroke="#e8e0c8" stroke-opacity="0.10" stroke-width="1"/>
<line x1="163.0" y1="50" x2="163.0" y2="132.0" stroke="#e8e0c8" stroke-opacity="0.10" stroke-width="1"/>
<line x1="180.4" y1="50" x2="180.4" y2="122.3" stroke="#e8e0c8" stroke-opacity="0.10" stroke-width="1"/>
<line x1="197.9" y1="50" x2="197.9" y2="223.8" stroke="#e8e0c8" stroke-opacity="0.10" stroke-width="1"/>
<line x1="215.3" y1="50" x2="215.3" y2="107.4" stroke="#e8e0c8" stroke-opacity="0.10" stroke-width="1"/>
<line x1="232.8" y1="50" x2="232.8" y2="107.4" stroke="#e8e0c8" stroke-opacity="0.10" stroke-width="1"/>
<line x1="250.3" y1="50" x2="250.3" y2="127.1" stroke="#e8e0c8" stroke-opacity="0.10" stroke-width="1"/>
<line x1="267.7" y1="50" x2="267.7" y2="123.7" stroke="#e8e0c8" stroke-opacity="0.10" stroke-width="1"/>
<line x1="285.2" y1="50" x2="285.2" y2="108.6" stroke="#e8e0c8" stroke-opacity="0.10" stroke-width="1"/>
<line x1="302.6" y1="50" x2="302.6" y2="165.5" stroke="#e8e0c8" stroke-opacity="0.10" stroke-width="1"/>
<line x1="320.1" y1="50" x2="320.1" y2="258.8" stroke="#e8e0c8" stroke-opacity="0.10" stroke-width="1"/>
<line x1="337.6" y1="50" x2="337.6" y2="164.2" stroke="#e8e0c8" stroke-opacity="0.10" stroke-width="1"/>
<line x1="355.0" y1="50" x2="355.0" y2="114.4" stroke="#e8e0c8" stroke-opacity="0.10" stroke-width="1"/>
<line x1="372.5" y1="50" x2="372.5" y2="94.7" stroke="#e8e0c8" stroke-opacity="0.10" stroke-width="1"/>
<line x1="389.9" y1="50" x2="389.9" y2="120.0" stroke="#e8e0c8" stroke-opacity="0.10" stroke-width="1"/>
<line x1="407.4" y1="50" x2="407.4" y2="150.4" stroke="#e8e0c8" stroke-opacity="0.10" stroke-width="1"/>
<line x1="424.9" y1="50" x2="424.9" y2="157.6" stroke="#e8e0c8" stroke-opacity="0.10" stroke-width="1"/>
<line x1="442.3" y1="50" x2="442.3" y2="123.9" stroke="#e8e0c8" stroke-opacity="0.10" stroke-width="1"/>
<line x1="459.8" y1="50" x2="459.8" y2="112.2" stroke="#e8e0c8" stroke-opacity="0.10" stroke-width="1"/>
<line x1="477.2" y1="50" x2="477.2" y2="112.2" stroke="#e8e0c8" stroke-opacity="0.10" stroke-width="1"/>
<line x1="494.7" y1="50" x2="494.7" y2="112.2" stroke="#e8e0c8" stroke-opacity="0.10" stroke-width="1"/>
<line x1="512.2" y1="50" x2="512.2" y2="187.0" stroke="#e8e0c8" stroke-opacity="0.10" stroke-width="1"/>
<line x1="529.6" y1="50" x2="529.6" y2="107.7" stroke="#e8e0c8" stroke-opacity="0.10" stroke-width="1"/>
<line x1="547.1" y1="50" x2="547.1" y2="96.0" stroke="#e8e0c8" stroke-opacity="0.10" stroke-width="1"/>
<line x1="564.5" y1="50" x2="564.5" y2="129.0" stroke="#e8e0c8" stroke-opacity="0.10" stroke-width="1"/>
<line x1="582.0" y1="50" x2="582.0" y2="161.3" stroke="#e8e0c8" stroke-opacity="0.10" stroke-width="1"/>
<line x1="599.5" y1="50" x2="599.5" y2="132.5" stroke="#e8e0c8" stroke-opacity="0.10" stroke-width="1"/>
<line x1="616.9" y1="50" x2="616.9" y2="132.5" stroke="#e8e0c8" stroke-opacity="0.10" stroke-width="1"/>
<line x1="634.4" y1="50" x2="634.4" y2="124.6" stroke="#e8e0c8" stroke-opacity="0.10" stroke-width="1"/>
<line x1="651.8" y1="50" x2="651.8" y2="81.9" stroke="#e8e0c8" stroke-opacity="0.10" stroke-width="1"/>
<line x1="669.3" y1="50" x2="669.3" y2="85.8" stroke="#e8e0c8" stroke-opacity="0.10" stroke-width="1"/>
<line x1="686.8" y1="50" x2="686.8" y2="182.6" stroke="#e8e0c8" stroke-opacity="0.10" stroke-width="1"/>
<line x1="704.2" y1="50" x2="704.2" y2="124.6" stroke="#e8e0c8" stroke-opacity="0.10" stroke-width="1"/>
<line x1="721.7" y1="50" x2="721.7" y2="124.6" stroke="#e8e0c8" stroke-opacity="0.10" stroke-width="1"/>
<line x1="739.1" y1="50" x2="739.1" y2="157.5" stroke="#e8e0c8" stroke-opacity="0.10" stroke-width="1"/>
<line x1="756.6" y1="50" x2="756.6" y2="127.2" stroke="#e8e0c8" stroke-opacity="0.10" stroke-width="1"/>
<line x1="774.1" y1="50" x2="774.1" y2="146.1" stroke="#e8e0c8" stroke-opacity="0.10" stroke-width="1"/>
<line x1="791.5" y1="50" x2="791.5" y2="150.6" stroke="#e8e0c8" stroke-opacity="0.10" stroke-width="1"/>
<line x1="809.0" y1="50" x2="809.0" y2="185.3" stroke="#e8e0c8" stroke-opacity="0.10" stroke-width="1"/>
<line x1="826.4" y1="50" x2="826.4" y2="127.0" stroke="#e8e0c8" stroke-opacity="0.10" stroke-width="1"/>
<line x1="843.9" y1="50" x2="843.9" y2="150.6" stroke="#e8e0c8" stroke-opacity="0.10" stroke-width="1"/>
<line x1="861.4" y1="50" x2="861.4" y2="153.6" stroke="#e8e0c8" stroke-opacity="0.10" stroke-width="1"/>
<line x1="878.8" y1="50" x2="878.8" y2="192.3" stroke="#e8e0c8" stroke-opacity="0.10" stroke-width="1"/>
<line x1="896.3" y1="50" x2="896.3" y2="159.8" stroke="#e8e0c8" stroke-opacity="0.10" stroke-width="1"/>
<line x1="913.7" y1="50" x2="913.7" y2="94.1" stroke="#e8e0c8" stroke-opacity="0.10" stroke-width="1"/>
<line x1="931.2" y1="50" x2="931.2" y2="114.1" stroke="#e8e0c8" stroke-opacity="0.10" stroke-width="1"/>
<line x1="948.7" y1="50" x2="948.7" y2="186.6" stroke="#e8e0c8" stroke-opacity="0.10" stroke-width="1"/>
<polyline points="58.2,324.0 75.7,283.4 93.1,216.0 110.6,167.6 128.0,221.2 145.5,115.0 163.0,132.0 180.4,122.3 197.9,223.8 215.3,107.4 232.8,107.4 250.3,127.1 267.7,123.7 285.2,108.6 302.6,165.5 320.1,258.8 337.6,164.2 355.0,114.4 372.5,94.7 389.9,120.0 407.4,150.4 424.9,157.6 442.3,123.9 459.8,112.2 477.2,112.2 494.7,112.2 512.2,187.0 529.6,107.7 547.1,96.0 564.5,129.0 582.0,161.3 599.5,132.5 616.9,132.5 634.4,124.6 651.8,81.9 669.3,85.8 686.8,182.6 704.2,124.6 721.7,124.6 739.1,157.5 756.6,127.2 774.1,146.1 791.5,150.6 809.0,185.3 826.4,127.0 843.9,150.6 861.4,153.6 878.8,192.3 896.3,159.8 913.7,94.1 931.2,114.1 948.7,186.6" fill="none" stroke="#b83a18" stroke-width="1.1" stroke-linejoin="round"/>
<polyline points="58.2,56.5 75.7,49.8 93.1,49.8 110.6,49.8 128.0,49.8 145.5,49.8 163.0,49.8 180.4,49.8 197.9,49.8 215.3,49.8 232.8,49.8 250.3,49.8 267.7,49.8 285.2,49.8 302.6,49.8 320.1,49.8 337.6,49.8 355.0,49.8 372.5,49.8 389.9,49.8 407.4,49.8 424.9,49.8 442.3,49.8 459.8,49.8 477.2,49.8 494.7,49.8 512.2,49.8 529.6,49.8 547.1,49.8 564.5,49.8 582.0,49.8 599.5,49.8 616.9,49.8 634.4,49.8 651.8,49.8 669.3,49.8 686.8,49.8 704.2,49.8 721.7,49.8 739.1,49.8 756.6,49.8 774.1,49.8 791.5,49.8 809.0,49.8 826.4,49.8 843.9,49.8 861.4,49.8 878.8,49.8 896.3,49.8 913.7,49.8 931.2,49.8 948.7,49.8" fill="none" stroke="#b23414" stroke-width="1" stroke-linejoin="round"/>
<polyline points="58.2,161.0 75.7,91.6 93.1,77.2 110.6,70.1 128.0,71.0 145.5,67.5 163.0,70.1 180.4,69.3 197.9,71.0 215.3,64.0 232.8,64.0 250.3,67.3 267.7,67.3 285.2,66.6 302.6,81.9 320.1,79.6 337.6,75.8 355.0,63.5 372.5,63.5 389.9,62.6 407.4,67.5 424.9,73.1 442.3,67.3 459.8,68.2 477.2,61.3 494.7,66.6 512.2,67.5 529.6,62.9 547.1,64.7 564.5,64.2 582.0,69.6 599.5,67.3 616.9,67.0 634.4,65.2 651.8,62.2 669.3,64.3 686.8,71.0 704.2,67.5 721.7,67.0 739.1,65.7 756.6,65.7 774.1,67.0 791.5,71.7 809.0,68.7 826.4,65.7 843.9,66.4 861.4,66.4 878.8,70.0 896.3,68.2 913.7,62.8 931.2,67.3 948.7,75.8" fill="none" stroke="#a01a0a" stroke-width="1.8" stroke-linejoin="round"/>
</g>
<line x1="50" y1="186.6" x2="976.5" y2="186.6" stroke="#ababab" stroke-width="1"/>
<clipPath id="cf"><polygon points="58.2,56.5 75.7,49.8 93.1,49.8 110.6,49.8 128.0,49.8 145.5,49.8 163.0,49.8 180.4,49.8 197.9,49.8 215.3,49.8 232.8,49.8 250.3,49.8 267.7,49.8 285.2,49.8 302.6,49.8 320.1,49.8 337.6,49.8 355.0,49.8 372.5,49.8 389.9,49.8 407.4,49.8 424.9,49.8 442.3,49.8 459.8,49.8 477.2,49.8 494.7,49.8 512.2,49.8 529.6,49.8 547.1,49.8 564.5,49.8 582.0,49.8 599.5,49.8 616.9,49.8 634.4,49.8 651.8,49.8 669.3,49.8 686.8,49.8 704.2,49.8 721.7,49.8 739.1,49.8 756.6,49.8 774.1,49.8 791.5,49.8 809.0,49.8 826.4,49.8 843.9,49.8 861.4,49.8 878.8,49.8 896.3,49.8 913.7,49.8 931.2,49.8 948.7,49.8 948.7,186.6 931.2,114.1 913.7,94.1 896.3,159.8 878.8,192.3 861.4,153.6 843.9,150.6 826.4,127.0 809.0,185.3 791.5,150.6 774.1,146.1 756.6,127.2 739.1,157.5 721.7,124.6 704.2,124.6 686.8,182.6 669.3,85.8 651.8,81.9 634.4,124.6 616.9,132.5 599.5,132.5 582.0,161.3 564.5,129.0 547.1,96.0 529.6,107.7 512.2,187.0 494.7,112.2 477.2,112.2 459.8,112.2 442.3,123.9 424.9,157.6 407.4,150.4 389.9,120.0 372.5,94.7 355.0,114.4 337.6,164.2 320.1,258.8 302.6,165.5 285.2,108.6 267.7,123.7 250.3,127.1 232.8,107.4 215.3,107.4 197.9,223.8 180.4,122.3 163.0,132.0 145.5,115.0 128.0,221.2 110.6,167.6 93.1,216.0 75.7,283.4 58.2,324.0"/></clipPath>
<rect x="906.6" y="51.6" width="15" height="271.9" fill="#a9abee" rx="1"/>
<g clip-path="url(#cb)"><g clip-path="url(#cf)"><polygon points="58.2,66.0 75.7,50.2 93.1,49.8 110.6,49.8 128.0,52.1 145.5,52.1 163.0,51.3 180.4,52.8 197.9,51.3 215.3,50.8 232.8,52.8 250.3,51.3 267.7,49.8 285.2,49.8 302.6,49.8 320.1,49.8 337.6,49.8 355.0,51.3 372.5,53.3 389.9,51.3 407.4,49.8 424.9,49.8 442.3,49.8 459.8,49.8 477.2,49.8 494.7,49.8 512.2,49.8 529.6,52.8 547.1,54.8 564.5,50.8 582.0,49.8 599.5,49.8 616.9,49.8 634.4,50.8 651.8,55.3 669.3,55.8 686.8,49.8 704.2,49.8 721.7,49.8 739.1,49.8 756.6,49.8 774.1,49.8 791.5,49.8 809.0,49.8 826.4,49.8 843.9,49.8 861.4,49.8 878.8,49.8 896.3,49.8 913.7,50.3 931.2,51.2 948.7,50.8 948.7,75.8 931.2,67.3 913.7,62.8 896.3,68.2 878.8,70.0 861.4,66.4 843.9,66.4 826.4,65.7 809.0,68.7 791.5,71.7 774.1,67.0 756.6,65.7 739.1,65.7 721.7,67.0 704.2,67.5 686.8,71.0 669.3,64.3 651.8,62.2 634.4,65.2 616.9,67.0 599.5,67.3 582.0,69.6 564.5,64.2 547.1,64.7 529.6,62.9 512.2,67.5 494.7,66.6 477.2,61.3 459.8,68.2 442.3,67.3 424.9,73.1 407.4,67.5 389.9,62.6 372.5,63.5 355.0,63.5 337.6,75.8 320.1,79.6 302.6,81.9 285.2,66.6 267.7,67.3 250.3,67.3 232.8,64.0 215.3,64.0 197.9,71.0 180.4,69.3 163.0,70.1 145.5,67.5 128.0,71.0 110.6,70.1 93.1,77.2 75.7,91.6 58.2,161.0" fill="#ff9a02"/><polygon points="58.2,161.0 75.7,91.6 93.1,77.2 110.6,70.1 128.0,71.0 145.5,67.5 163.0,70.1 180.4,69.3 197.9,71.0 215.3,64.0 232.8,64.0 250.3,67.3 267.7,67.3 285.2,66.6 302.6,81.9 320.1,79.6 337.6,75.8 355.0,63.5 372.5,63.5 389.9,62.6 407.4,67.5 424.9,73.1 442.3,67.3 459.8,68.2 477.2,61.3 494.7,66.6 512.2,67.5 529.6,62.9 547.1,64.7 564.5,64.2 582.0,69.6 599.5,67.3 616.9,67.0 634.4,65.2 651.8,62.2 669.3,64.3 686.8,71.0 704.2,67.5 721.7,67.0 739.1,65.7 756.6,65.7 774.1,67.0 791.5,71.7 809.0,68.7 826.4,65.7 843.9,66.4 861.4,66.4 878.8,70.0 896.3,68.2 913.7,62.8 931.2,67.3 948.7,75.8 948.7,106.3 931.2,84.7 913.7,71.3 896.3,88.7 878.8,93.3 861.4,85.8 843.9,87.2 826.4,81.0 809.0,90.4 791.5,95.1 774.1,83.7 756.6,82.4 739.1,82.4 721.7,82.8 704.2,86.3 686.8,96.3 669.3,74.9 651.8,70.5 634.4,82.8 616.9,83.7 599.5,84.5 582.0,91.1 564.5,76.9 547.1,74.9 529.6,74.9 512.2,90.4 494.7,81.9 477.2,72.2 459.8,84.0 442.3,85.1 424.9,97.7 407.4,84.5 389.9,74.2 372.5,74.5 355.0,76.6 337.6,102.1 320.1,120.6 302.6,112.7 285.2,81.0 267.7,84.0 250.3,85.1 232.8,74.5 215.3,74.9 197.9,104.8 180.4,86.3 163.0,88.1 145.5,82.8 128.0,100.4 110.6,96.9 93.1,111.8 75.7,148.7 58.2,248.4" fill="#fb9904"/><polygon points="58.2,248.4 75.7,148.7 93.1,111.8 110.6,96.9 128.0,100.4 145.5,82.8 163.0,88.1 180.4,86.3 197.9,104.8 215.3,74.9 232.8,74.5 250.3,85.1 267.7,84.0 285.2,81.0 302.6,112.7 320.1,120.6 337.6,102.1 355.0,76.6 372.5,74.5 389.9,74.2 407.4,84.5 424.9,97.7 442.3,85.1 459.8,84.0 477.2,72.2 494.7,81.9 512.2,90.4 529.6,74.9 547.1,74.9 564.5,76.9 582.0,91.1 599.5,84.5 616.9,83.7 634.4,82.8 651.8,70.5 669.3,74.9 686.8,96.3 704.2,86.3 721.7,82.8 739.1,82.4 756.6,82.4 774.1,83.7 791.5,95.1 809.0,90.4 826.4,81.0 843.9,87.2 861.4,85.8 878.8,93.3 896.3,88.7 913.7,71.3 931.2,84.7 948.7,106.3 948.7,186.6 931.2,114.1 913.7,94.1 896.3,159.8 878.8,192.3 861.4,153.6 843.9,150.6 826.4,127.0 809.0,185.3 791.5,150.6 774.1,146.1 756.6,127.2 739.1,157.5 721.7,124.6 704.2,124.6 686.8,182.6 669.3,85.8 651.8,81.9 634.4,124.6 616.9,132.5 599.5,132.5 582.0,161.3 564.5,129.0 547.1,96.0 529.6,107.7 512.2,187.0 494.7,112.2 477.2,112.2 459.8,112.2 442.3,123.9 424.9,157.6 407.4,150.4 389.9,120.0 372.5,94.7 355.0,114.4 337.6,164.2 320.1,258.8 302.6,165.5 285.2,108.6 267.7,123.7 250.3,127.1 232.8,107.4 215.3,107.4 197.9,223.8 180.4,122.3 163.0,132.0 145.5,115.0 128.0,221.2 110.6,167.6 93.1,216.0 75.7,283.4 58.2,324.0" fill="#f9da3e"/><path d="M628.60 48l280 280M631.30 48l280 280M634.00 48l280 280M636.70 48l280 280M639.40 48l280 280M642.10 48l280 280M644.80 48l280 280M647.50 48l280 280M650.20 48l280 280M652.90 48l280 280M655.60 48l280 280M658.30 48l280 280M661.00 48l280 280M663.70 48l280 280M666.40 48l280 280M669.10 48l280 280M671.80 48l280 280M674.50 48l280 280M677.20 48l280 280M679.90 48l280 280M682.60 48l280 280M685.30 48l280 280M688.00 48l280 280M690.70 48l280 280M693.40 48l280 280M696.10 48l280 280M698.80 48l280 280M701.50 48l280 280M704.20 48l280 280M706.90 48l280 280M709.60 48l280 280M712.30 48l280 280M715.00 48l280 280M717.70 48l280 280M720.40 48l280 280M723.10 48l280 280M725.80 48l280 280M728.50 48l280 280M731.20 48l280 280M733.90 48l280 280M736.60 48l280 280M739.30 48l280 280M742.00 48l280 280M744.70 48l280 280M747.40 48l280 280M750.10 48l280 280M752.80 48l280 280M755.50 48l280 280M758.20 48l280 280M760.90 48l280 280M763.60 48l280 280M766.30 48l280 280M769.00 48l280 280M771.70 48l280 280M774.40 48l280 280M777.10 48l280 280M779.80 48l280 280M782.50 48l280 280M785.20 48l280 280M787.90 48l280 280M790.60 48l280 280M793.30 48l280 280M796.00 48l280 280M798.70 48l280 280M801.40 48l280 280M804.10 48l280 280M806.80 48l280 280M809.50 48l280 280M812.20 48l280 280M814.90 48l280 280M817.60 48l280 280M820.30 48l280 280M823.00 48l280 280M825.70 48l280 280M828.40 48l280 280M831.10 48l280 280M833.80 48l280 280M836.50 48l280 280M839.20 48l280 280M841.90 48l280 280M844.60 48l280 280M847.30 48l280 280M850.00 48l280 280M852.70 48l280 280M855.40 48l280 280M858.10 48l280 280M860.80 48l280 280M863.50 48l280 280M866.20 48l280 280M868.90 48l280 280M871.60 48l280 280M874.30 48l280 280M877.00 48l280 280M879.70 48l280 280M882.40 48l280 280M885.10 48l280 280M887.80 48l280 280M890.50 48l280 280M893.20 48l280 280M895.90 48l280 280M898.60 48l280 280M901.30 48l280 280M904.00 48l280 280M906.70 48l280 280M909.40 48l280 280M912.10 48l280 280M914.80 48l280 280M917.50 48l280 280M920.20 48l280 280M922.90 48l280 280" stroke="#d4ae1a" stroke-width="1.0" fill="none" clip-path="url(#cy)"/><path d="M628.60 48l280 280M631.30 48l280 280M634.00 48l280 280M636.70 48l280 280M639.40 48l280 280M642.10 48l280 280M644.80 48l280 280M647.50 48l280 280M650.20 48l280 280M652.90 48l280 280M655.60 48l280 280M658.30 48l280 280M661.00 48l280 280M663.70 48l280 280M666.40 48l280 280M669.10 48l280 280M671.80 48l280 280M674.50 48l280 280M677.20 48l280 280M679.90 48l280 280M682.60 48l280 280M685.30 48l280 280M688.00 48l280 280M690.70 48l280 280M693.40 48l280 280M696.10 48l280 280M698.80 48l280 280M701.50 48l280 280M704.20 48l280 280M706.90 48l280 280M709.60 48l280 280M712.30 48l280 280M715.00 48l280 280M717.70 48l280 280M720.40 48l280 280M723.10 48l280 280M725.80 48l280 280M728.50 48l280 280M731.20 48l280 280M733.90 48l280 280M736.60 48l280 280M739.30 48l280 280M742.00 48l280 280M744.70 48l280 280M747.40 48l280 280M750.10 48l280 280M752.80 48l280 280M755.50 48l280 280M758.20 48l280 280M760.90 48l280 280M763.60 48l280 280M766.30 48l280 280M769.00 48l280 280M771.70 48l280 280M774.40 48l280 280M777.10 48l280 280M779.80 48l280 280M782.50 48l280 280M785.20 48l280 280M787.90 48l280 280M790.60 48l280 280M793.30 48l280 280M796.00 48l280 280M798.70 48l280 280M801.40 48l280 280M804.10 48l280 280M806.80 48l280 280M809.50 48l280 280M812.20 48l280 280M814.90 48l280 280M817.60 48l280 280M820.30 48l280 280M823.00 48l280 280M825.70 48l280 280M828.40 48l280 280M831.10 48l280 280M833.80 48l280 280M836.50 48l280 280M839.20 48l280 280M841.90 48l280 280M844.60 48l280 280M847.30 48l280 280M850.00 48l280 280M852.70 48l280 280M855.40 48l280 280M858.10 48l280 280M860.80 48l280 280M863.50 48l280 280M866.20 48l280 280M868.90 48l280 280M871.60 48l280 280M874.30 48l280 280M877.00 48l280 280M879.70 48l280 280M882.40 48l280 280M885.10 48l280 280M887.80 48l280 280M890.50 48l280 280M893.20 48l280 280M895.90 48l280 280M898.60 48l280 280M901.30 48l280 280M904.00 48l280 280M906.70 48l280 280M909.40 48l280 280M912.10 48l280 280M914.80 48l280 280M917.50 48l280 280M920.20 48l280 280M922.90 48l280 280" stroke="#e58200" stroke-width="1.0" fill="none" clip-path="url(#co)"/><rect x="906.6" y="51.6" width="15" height="271.9" fill="#85a7f6" fill-opacity="0.45"/><polyline points="58.2,161.0 75.7,91.6 93.1,77.2 110.6,70.1 128.0,71.0 145.5,67.5 163.0,70.1 180.4,69.3 197.9,71.0 215.3,64.0 232.8,64.0 250.3,67.3 267.7,67.3 285.2,66.6 302.6,81.9 320.1,79.6 337.6,75.8 355.0,63.5 372.5,63.5 389.9,62.6 407.4,67.5 424.9,73.1 442.3,67.3 459.8,68.2 477.2,61.3 494.7,66.6 512.2,67.5 529.6,62.9 547.1,64.7 564.5,64.2 582.0,69.6 599.5,67.3 616.9,67.0 634.4,65.2 651.8,62.2 669.3,64.3 686.8,71.0 704.2,67.5 721.7,67.0 739.1,65.7 756.6,65.7 774.1,67.0 791.5,71.7 809.0,68.7 826.4,65.7 843.9,66.4 861.4,66.4 878.8,70.0 896.3,68.2 913.7,62.8 931.2,67.3 948.7,75.8" fill="none" stroke="#8e1c14" stroke-width="2"/></g></g>
<polyline points="58.2,324.0 75.7,283.4 93.1,216.0 110.6,167.6 128.0,221.2 145.5,115.0 163.0,132.0 180.4,122.3 197.9,223.8 215.3,107.4 232.8,107.4 250.3,127.1 267.7,123.7 285.2,108.6 302.6,165.5 320.1,258.8 337.6,164.2 355.0,114.4 372.5,94.7 389.9,120.0 407.4,150.4 424.9,157.6 442.3,123.9 459.8,112.2 477.2,112.2 494.7,112.2 512.2,187.0 529.6,107.7 547.1,96.0 564.5,129.0 582.0,161.3 599.5,132.5 616.9,132.5 634.4,124.6 651.8,81.9 669.3,85.8 686.8,182.6 704.2,124.6 721.7,124.6 739.1,157.5 756.6,127.2 774.1,146.1 791.5,150.6 809.0,185.3 826.4,127.0 843.9,150.6 861.4,153.6 878.8,192.3 896.3,159.8 913.7,94.1 931.2,114.1 948.7,186.6" fill="none" stroke="#b04a58" stroke-width="1.1" clip-path="url(#cb)"/>
<line x1="913.7" y1="95" x2="913.7" y2="323" stroke="#8084d8" stroke-opacity="0.55" stroke-width="1"/>
<rect x="906.6" y="51.6" width="15" height="271.9" fill="none" stroke="#2c2c78" stroke-width="1.3" rx="1"/>
<line x1="49" y1="49.4" x2="976.5" y2="49.4" stroke="#7c7c7c" stroke-width="1.2"/>
<line x1="75" y1="49.6" x2="948.8" y2="49.6" stroke="#8a3a1a" stroke-width="1.2"/>
<line x1="49.7" y1="49" x2="49.7" y2="325.6" stroke="#3c3c3c" stroke-width="1.5"/>
<line x1="49" y1="325" x2="976.5" y2="325" stroke="#3c3c3c" stroke-width="1.5"/>
<g><text x="58.2" y="335.2" text-anchor="middle" font-size="8.6" letter-spacing="-0.3" fill="#2c2c2c" stroke="#2c2c2c" stroke-width="0.28">0</text><text x="75.7" y="335.2" text-anchor="middle" font-size="8.6" letter-spacing="-0.3" fill="#2c2c2c" stroke="#2c2c2c" stroke-width="0.28">1</text><text x="93.1" y="335.2" text-anchor="middle" font-size="8.6" letter-spacing="-0.3" fill="#2c2c2c" stroke="#2c2c2c" stroke-width="0.28">2</text><text x="110.6" y="335.2" text-anchor="middle" font-size="8.6" letter-spacing="-0.3" fill="#2c2c2c" stroke="#2c2c2c" stroke-width="0.28">3</text><text x="128.0" y="335.2" text-anchor="middle" font-size="8.6" letter-spacing="-0.3" fill="#2c2c2c" stroke="#2c2c2c" stroke-width="0.28">4</text><text x="145.5" y="335.2" text-anchor="middle" font-size="8.6" letter-spacing="-0.3" fill="#2c2c2c" stroke="#2c2c2c" stroke-width="0.28">5</text><text x="163.0" y="335.2" text-anchor="middle" font-size="8.6" letter-spacing="-0.3" fill="#2c2c2c" stroke="#2c2c2c" stroke-width="0.28">6</text><text x="180.4" y="335.2" text-anchor="middle" font-size="8.6" letter-spacing="-0.3" fill="#2c2c2c" stroke="#2c2c2c" stroke-width="0.28">7</text><text x="197.9" y="335.2" text-anchor="middle" font-size="8.6" letter-spacing="-0.3" fill="#2c2c2c" stroke="#2c2c2c" stroke-width="0.28">8</text><text x="215.3" y="335.2" text-anchor="middle" font-size="8.6" letter-spacing="-0.3" fill="#2c2c2c" stroke="#2c2c2c" stroke-width="0.28">9</text><text x="232.8" y="335.2" text-anchor="middle" font-size="8.6" letter-spacing="-0.3" fill="#2c2c2c" stroke="#2c2c2c" stroke-width="0.28">10</text><text x="250.3" y="335.2" text-anchor="middle" font-size="8.6" letter-spacing="-0.3" fill="#2c2c2c" stroke="#2c2c2c" stroke-width="0.28">11</text><text x="267.7" y="335.2" text-anchor="middle" font-size="8.6" letter-spacing="-0.3" fill="#2c2c2c" stroke="#2c2c2c" stroke-width="0.28">12</text><text x="285.2" y="335.2" text-anchor="middle" font-size="8.6" letter-spacing="-0.3" fill="#2c2c2c" stroke="#2c2c2c" stroke-width="0.28">13</text><text x="302.6" y="335.2" text-anchor="middle" font-size="8.6" letter-spacing="-0.3" fill="#2c2c2c" stroke="#2c2c2c" stroke-width="0.28">14</text><text x="320.1" y="335.2" text-anchor="middle" font-size="8.6" letter-spacing="-0.3" fill="#2c2c2c" stroke="#2c2c2c" stroke-width="0.28">15</text><text x="337.6" y="335.2" text-anchor="middle" font-size="8.6" letter-spacing="-0.3" fill="#2c2c2c" stroke="#2c2c2c" stroke-width="0.28">16</text><text x="355.0" y="335.2" text-anchor="middle" font-size="8.6" letter-spacing="-0.3" fill="#2c2c2c" stroke="#2c2c2c" stroke-width="0.28">17</text><text x="372.5" y="335.2" text-anchor="middle" font-size="8.6" letter-spacing="-0.3" fill="#2c2c2c" stroke="#2c2c2c" stroke-width="0.28">18</text><text x="389.9" y="335.2" text-anchor="middle" font-size="8.6" letter-spacing="-0.3" fill="#2c2c2c" stroke="#2c2c2c" stroke-width="0.28">19</text><text x="407.4" y="335.2" text-anchor="middle" font-size="8.6" letter-spacing="-0.3" fill="#2c2c2c" stroke="#2c2c2c" stroke-width="0.28">20</text><text x="424.9" y="335.2" text-anchor="middle" font-size="8.6" letter-spacing="-0.3" fill="#2c2c2c" stroke="#2c2c2c" stroke-width="0.28">21</text><text x="442.3" y="335.2" text-anchor="middle" font-size="8.6" letter-spacing="-0.3" fill="#2c2c2c" stroke="#2c2c2c" stroke-width="0.28">22</text><text x="459.8" y="335.2" text-anchor="middle" font-size="8.6" letter-spacing="-0.3" fill="#2c2c2c" stroke="#2c2c2c" stroke-width="0.28">23</text><text x="477.2" y="335.2" text-anchor="middle" font-size="8.6" letter-spacing="-0.3" fill="#2c2c2c" stroke="#2c2c2c" stroke-width="0.28">24</text><text x="494.7" y="335.2" text-anchor="middle" font-size="8.6" letter-spacing="-0.3" fill="#2c2c2c" stroke="#2c2c2c" stroke-width="0.28">25</text><text x="512.2" y="335.2" text-anchor="middle" font-size="8.6" letter-spacing="-0.3" fill="#2c2c2c" stroke="#2c2c2c" stroke-width="0.28">26</text><text x="529.6" y="335.2" text-anchor="middle" font-size="8.6" letter-spacing="-0.3" fill="#2c2c2c" stroke="#2c2c2c" stroke-width="0.28">27</text><text x="547.1" y="335.2" text-anchor="middle" font-size="8.6" letter-spacing="-0.3" fill="#2c2c2c" stroke="#2c2c2c" stroke-width="0.28">28</text><text x="564.5" y="335.2" text-anchor="middle" font-size="8.6" letter-spacing="-0.3" fill="#2c2c2c" stroke="#2c2c2c" stroke-width="0.28">29</text><text x="582.0" y="335.2" text-anchor="middle" font-size="8.6" letter-spacing="-0.3" fill="#2c2c2c" stroke="#2c2c2c" stroke-width="0.28">30</text><text x="599.5" y="335.2" text-anchor="middle" font-size="8.6" letter-spacing="-0.3" fill="#2c2c2c" stroke="#2c2c2c" stroke-width="0.28">31</text><text x="616.9" y="335.2" text-anchor="middle" font-size="8.6" letter-spacing="-0.3" fill="#2c2c2c" stroke="#2c2c2c" stroke-width="0.28">32</text><text x="634.4" y="335.2" text-anchor="middle" font-size="8.6" letter-spacing="-0.3" fill="#2c2c2c" stroke="#2c2c2c" stroke-width="0.28">33</text><text x="651.8" y="335.2" text-anchor="middle" font-size="8.6" letter-spacing="-0.3" fill="#2c2c2c" stroke="#2c2c2c" stroke-width="0.28">34</text><text x="669.3" y="335.2" text-anchor="middle" font-size="8.6" letter-spacing="-0.3" fill="#2c2c2c" stroke="#2c2c2c" stroke-width="0.28">35</text><text x="686.8" y="335.2" text-anchor="middle" font-size="8.6" letter-spacing="-0.3" fill="#2c2c2c" stroke="#2c2c2c" stroke-width="0.28">36</text><text x="704.2" y="335.2" text-anchor="middle" font-size="8.6" letter-spacing="-0.3" fill="#2c2c2c" stroke="#2c2c2c" stroke-width="0.28">37</text><text x="721.7" y="335.2" text-anchor="middle" font-size="8.6" letter-spacing="-0.3" fill="#2c2c2c" stroke="#2c2c2c" stroke-width="0.28">38</text><text x="739.1" y="335.2" text-anchor="middle" font-size="8.6" letter-spacing="-0.3" fill="#2c2c2c" stroke="#2c2c2c" stroke-width="0.28">39</text><text x="756.6" y="335.2" text-anchor="middle" font-size="8.6" letter-spacing="-0.3" fill="#2c2c2c" stroke="#2c2c2c" stroke-width="0.28">40</text><text x="774.1" y="335.2" text-anchor="middle" font-size="8.6" letter-spacing="-0.3" fill="#2c2c2c" stroke="#2c2c2c" stroke-width="0.28">41</text><text x="791.5" y="335.2" text-anchor="middle" font-size="8.6" letter-spacing="-0.3" fill="#2c2c2c" stroke="#2c2c2c" stroke-width="0.28">42</text><text x="809.0" y="335.2" text-anchor="middle" font-size="8.6" letter-spacing="-0.3" fill="#2c2c2c" stroke="#2c2c2c" stroke-width="0.28">43</text><text x="826.4" y="335.2" text-anchor="middle" font-size="8.6" letter-spacing="-0.3" fill="#2c2c2c" stroke="#2c2c2c" stroke-width="0.28">44</text><text x="843.9" y="335.2" text-anchor="middle" font-size="8.6" letter-spacing="-0.3" fill="#2c2c2c" stroke="#2c2c2c" stroke-width="0.28">45</text><text x="861.4" y="335.2" text-anchor="middle" font-size="8.6" letter-spacing="-0.3" fill="#2c2c2c" stroke="#2c2c2c" stroke-width="0.28">46</text><text x="878.8" y="335.2" text-anchor="middle" font-size="8.6" letter-spacing="-0.3" fill="#2c2c2c" stroke="#2c2c2c" stroke-width="0.28">47</text><text x="896.3" y="335.2" text-anchor="middle" font-size="8.6" letter-spacing="-0.3" fill="#2c2c2c" stroke="#2c2c2c" stroke-width="0.28">48</text><text x="913.7" y="335.2" text-anchor="middle" font-size="8.6" letter-spacing="-0.3" fill="#2c2c2c" stroke="#2c2c2c" stroke-width="0.28">49</text><text x="931.2" y="335.2" text-anchor="middle" font-size="8.6" letter-spacing="-0.3" fill="#2c2c2c" stroke="#2c2c2c" stroke-width="0.28">50</text><text x="948.7" y="335.2" text-anchor="middle" font-size="8.6" letter-spacing="-0.3" fill="#2c2c2c" stroke="#2c2c2c" stroke-width="0.28">51</text></g>
<rect x="44.5" y="341" width="936.6" height="29" fill="#fbfbfb"/>
<line x1="44.5" y1="340.8" x2="981" y2="340.8" stroke="#cbcbcb" stroke-width="1.5"/>
<line x1="981.2" y1="340" x2="981.2" y2="370" stroke="#b4b4b4" stroke-width="1"/>
<text x="47.3" y="359.3" font-size="11.2" fill="#2a2a34" stroke="#2a2a34" stroke-width="0.3">Display</text>
<rect x="88.6" y="342.6" width="26" height="24.6" fill="#f1f8fd" stroke="#4f9cd6" stroke-width="1.2"/>
<ellipse cx="101.6" cy="354.4" rx="9.8" ry="8.8" fill="url(#gO)" stroke="#70401a" stroke-width="1.4"/>
<ellipse cx="129.7" cy="354.4" rx="9.8" ry="8.8" fill="url(#gG)"/>
<path d="M129.7 345.59999999999997 A9.8 8.8 0 0 1 129.7 363.2 Z" fill="url(#gO)"/>
<ellipse cx="129.7" cy="354.4" rx="9.8" ry="8.8" fill="none" stroke="#54504c" stroke-width="1.5"/>
<ellipse cx="157.7" cy="354.4" rx="9.8" ry="8.8" fill="url(#gG)"/>
<path d="M157.7 354.4 L167.5 354.4 A9.8 8.8 0 0 1 157.7 363.2 Z" fill="url(#gW)"/>
<ellipse cx="157.7" cy="354.4" rx="9.8" ry="8.8" fill="none" stroke="#54504c" stroke-width="1.5"/>
<ellipse cx="185.9" cy="354.4" rx="9.8" ry="8.8" fill="url(#gG)"/>
<path d="M185.9 354.4 L192.83 360.62 A9.8 8.8 0 0 1 185.9 363.2 Z" fill="url(#gW)"/>
<ellipse cx="185.9" cy="354.4" rx="9.8" ry="8.8" fill="none" stroke="#54504c" stroke-width="1.5"/>
<line x1="202.6" y1="345.5" x2="202.6" y2="364.5" stroke="#dadada" stroke-width="1.4"/>
<rect x="208.6" y="345.5" width="20.8" height="18.4" rx="1.6" fill="url(#gY)" stroke="#6c6424" stroke-width="1.1"/>
<path d="M221.50 354.60 L226.70 354.60 A7.8 7.8 0 0 0 222.80 347.85 L220.20 352.35 A2.6 2.6 0 0 1 221.50 354.60 Z" fill="#1c1408"/>
<path d="M217.60 352.35 L215.00 347.85 A7.8 7.8 0 0 0 211.10 354.60 L216.30 354.60 A2.6 2.6 0 0 1 217.60 352.35 Z" fill="#1c1408"/>
<path d="M217.60 356.85 L215.00 361.35 A7.8 7.8 0 0 0 222.80 361.35 L220.20 356.85 A2.6 2.6 0 0 1 217.60 356.85 Z" fill="#1c1408"/>
<circle cx="218.9" cy="354.6" r="1.6" fill="#1c1408"/>
<line x1="905.6" y1="347.9" x2="909" y2="350.6" stroke="#cacaca" stroke-width="1.3"/>
<path d="M917 357.4 L922 362.3" fill="none" stroke="#3a3a3a" stroke-width="1.7"/>
<path d="M917.2 362.6 L922.6 362.6 L922.6 357.4" fill="none" stroke="#3a3a3a" stroke-width="1.7"/>
<g transform="translate(913.1,353.9) rotate(-38)">
<clipPath id="cc"><rect x="-12.4" y="-4.7" width="24.8" height="9.4" rx="4.7"/></clipPath>
<g clip-path="url(#cc)">
<rect x="-13.2" y="-4.7" width="26.4" height="9.4" fill="#52aa20"/>
<rect x="-13.2" y="-4.7" width="4.4" height="9.4" fill="#c4ee9a"/>
<rect x="-9" y="-4.5" width="6" height="9" fill="#4ea81e"/>
<rect x="-1.5" y="-4.5" width="8" height="9" fill="#9fe26e"/>
<rect x="7.8" y="-4.7" width="5" height="9.4" fill="#cdf2a4"/>
<rect x="-13.2" y="-3.3" width="26.4" height="2.2" fill="#ffffff" fill-opacity="0.28"/>
<rect x="-13.2" y="2" width="26.4" height="2.5" fill="#1e5a0a" fill-opacity="0.25"/>
<rect x="-3.2" y="-4.5" width="1.8" height="9" fill="#1e5a0a"/>
<rect x="6" y="-4.7" width="1.9" height="9.4" fill="#1e5a0a"/>
<rect x="-9.3" y="-4.5" width="0.9" height="9" fill="#2e7a12" fill-opacity="0.8"/>
</g>
<rect x="-12.4" y="-4.7" width="24.8" height="9.4" rx="4.7" fill="none" stroke="#3e4c1e" stroke-width="1.2"/>
</g>
<text x="928.2" y="359.2" font-size="11" fill="#2a2a34" stroke="#2a2a34" stroke-width="0.3">Reinstate</text>
<rect x="45" y="371" width="311.5" height="289.6" fill="#f3f3f3"/>
<line x1="44" y1="371.3" x2="981.5" y2="371.3" stroke="#7c7c7c" stroke-width="1.8"/>
<line x1="45" y1="370.5" x2="45" y2="661" stroke="#7c7c7c" stroke-width="1.8"/>
<line x1="44" y1="661.9" x2="981.5" y2="661.9" stroke="#bcbcbc" stroke-width="1.1"/>
<line x1="981.3" y1="371" x2="981.3" y2="661" stroke="#c6c6c6" stroke-width="1"/>
<line x1="51.3" y1="376.5" x2="51.3" y2="656.1" stroke="#dbdbdb" stroke-width="1"/>
<line x1="81.2" y1="376.5" x2="81.2" y2="656.1" stroke="#dbdbdb" stroke-width="1"/>
<line x1="111.0" y1="376.5" x2="111.0" y2="656.1" stroke="#dbdbdb" stroke-width="1"/>
<line x1="140.9" y1="376.5" x2="140.9" y2="656.1" stroke="#dbdbdb" stroke-width="1"/>
<line x1="170.7" y1="376.5" x2="170.7" y2="656.1" stroke="#dbdbdb" stroke-width="1"/>
<line x1="200.6" y1="376.5" x2="200.6" y2="656.1" stroke="#dbdbdb" stroke-width="1"/>
<line x1="230.4" y1="376.5" x2="230.4" y2="656.1" stroke="#dbdbdb" stroke-width="1"/>
<line x1="260.2" y1="376.5" x2="260.2" y2="656.1" stroke="#dbdbdb" stroke-width="1"/>
<line x1="290.1" y1="376.5" x2="290.1" y2="656.1" stroke="#dbdbdb" stroke-width="1"/>
<line x1="320.0" y1="376.5" x2="320.0" y2="656.1" stroke="#dbdbdb" stroke-width="1"/>
<line x1="349.8" y1="376.5" x2="349.8" y2="656.1" stroke="#dbdbdb" stroke-width="1"/>
<line x1="51.3" y1="376.5" x2="349.8" y2="376.5" stroke="#dbdbdb" stroke-width="1"/>
<line x1="51.3" y1="404.5" x2="349.8" y2="404.5" stroke="#dbdbdb" stroke-width="1"/>
<line x1="51.3" y1="432.4" x2="349.8" y2="432.4" stroke="#dbdbdb" stroke-width="1"/>
<line x1="51.3" y1="460.4" x2="349.8" y2="460.4" stroke="#dbdbdb" stroke-width="1"/>
<line x1="51.3" y1="488.3" x2="349.8" y2="488.3" stroke="#dbdbdb" stroke-width="1"/>
<line x1="51.3" y1="516.3" x2="349.8" y2="516.3" stroke="#dbdbdb" stroke-width="1"/>
<line x1="51.3" y1="544.3" x2="349.8" y2="544.3" stroke="#dbdbdb" stroke-width="1"/>
<line x1="51.3" y1="572.2" x2="349.8" y2="572.2" stroke="#dbdbdb" stroke-width="1"/>
<line x1="51.3" y1="600.2" x2="349.8" y2="600.2" stroke="#dbdbdb" stroke-width="1"/>
<line x1="51.3" y1="628.1" x2="349.8" y2="628.1" stroke="#dbdbdb" stroke-width="1"/>
<line x1="51.3" y1="656.1" x2="349.8" y2="656.1" stroke="#dbdbdb" stroke-width="1"/>
<ellipse cx="76.0" cy="473.8" rx="2.8" ry="2.5" fill="#0a0a0a"/>
<ellipse cx="104.1" cy="473.8" rx="2.8" ry="2.5" fill="#0a0a0a"/>
<ellipse cx="142.8" cy="468.4" rx="2.8" ry="2.5" fill="#0a0a0a"/>
<ellipse cx="128.1" cy="482.7" rx="2.8" ry="2.5" fill="#0a0a0a"/>
<ellipse cx="163.2" cy="477.3" rx="2.8" ry="2.5" fill="#0a0a0a"/>
<ellipse cx="199.8" cy="476.5" rx="2.8" ry="2.5" fill="#0a0a0a"/>
<ellipse cx="231.9" cy="469.3" rx="2.8" ry="2.5" fill="#0a0a0a"/>
<ellipse cx="181.7" cy="487.9" rx="2.8" ry="2.5" fill="#0a0a0a"/>
<ellipse cx="224.0" cy="486.0" rx="2.8" ry="2.5" fill="#0a0a0a"/>
<ellipse cx="250.4" cy="486.0" rx="2.8" ry="2.5" fill="#0a0a0a"/>
<ellipse cx="284.3" cy="480.8" rx="2.8" ry="2.5" fill="#0a0a0a"/>
<ellipse cx="112.6" cy="499.2" rx="2.8" ry="2.5" fill="#0a0a0a"/>
<ellipse cx="144.6" cy="493.2" rx="2.8" ry="2.5" fill="#0a0a0a"/>
<ellipse cx="162.1" cy="500.9" rx="2.8" ry="2.5" fill="#0a0a0a"/>
<ellipse cx="209.5" cy="501.8" rx="2.8" ry="2.5" fill="#0a0a0a"/>
<ellipse cx="232.8" cy="498.4" rx="2.8" ry="2.5" fill="#0a0a0a"/>
<ellipse cx="272.7" cy="501.8" rx="2.8" ry="2.5" fill="#0a0a0a"/>
<ellipse cx="178.5" cy="510.6" rx="2.8" ry="2.5" fill="#0a0a0a"/>
<ellipse cx="147.4" cy="514.2" rx="2.8" ry="2.5" fill="#0a0a0a"/>
<ellipse cx="226.1" cy="511.5" rx="2.8" ry="2.5" fill="#0a0a0a"/>
<ellipse cx="51.6" cy="524.8" rx="2.8" ry="2.5" fill="#0a0a0a"/>
<ellipse cx="74.8" cy="526.3" rx="2.8" ry="2.5" fill="#0a0a0a"/>
<ellipse cx="119.3" cy="519.5" rx="2.8" ry="2.5" fill="#0a0a0a"/>
<ellipse cx="131.9" cy="528.2" rx="2.8" ry="2.5" fill="#0a0a0a"/>
<ellipse cx="202.6" cy="523.8" rx="2.8" ry="2.5" fill="#0a0a0a"/>
<ellipse cx="261.9" cy="522.9" rx="2.8" ry="2.5" fill="#0a0a0a"/>
<ellipse cx="288.3" cy="522.9" rx="2.8" ry="2.5" fill="#0a0a0a"/>
<ellipse cx="91.4" cy="538.0" rx="2.8" ry="2.5" fill="#0a0a0a"/>
<ellipse cx="126.0" cy="542.4" rx="2.8" ry="2.5" fill="#0a0a0a"/>
<ellipse cx="167.0" cy="543.3" rx="2.8" ry="2.5" fill="#0a0a0a"/>
<ellipse cx="189.1" cy="541.5" rx="2.8" ry="2.5" fill="#0a0a0a"/>
<ellipse cx="213.3" cy="540.7" rx="2.8" ry="2.5" fill="#0a0a0a"/>
<ellipse cx="265.8" cy="537.9" rx="2.8" ry="2.5" fill="#0a0a0a"/>
<ellipse cx="253.3" cy="548.4" rx="2.8" ry="2.5" fill="#0a0a0a"/>
<ellipse cx="86.5" cy="553.0" rx="2.8" ry="2.5" fill="#0a0a0a"/>
<ellipse cx="114.4" cy="558.3" rx="2.8" ry="2.5" fill="#0a0a0a"/>
<ellipse cx="144.5" cy="551.9" rx="2.8" ry="2.5" fill="#0a0a0a"/>
<ellipse cx="194.2" cy="559.1" rx="2.8" ry="2.5" fill="#0a0a0a"/>
<ellipse cx="228.9" cy="555.9" rx="2.8" ry="2.5" fill="#0a0a0a"/>
<ellipse cx="296.8" cy="554.8" rx="2.8" ry="2.5" fill="#0a0a0a"/>
<ellipse cx="264.9" cy="566.3" rx="2.8" ry="2.5" fill="#0a0a0a"/>
<path d="M174.6 463.5 l5.8 5.2 M180.4 463.5 l-5.8 5.2" stroke="#96121a" stroke-width="1.9" fill="none"/>
<path d="M60.3 491.6 l5.8 5.2 M66.1 491.6 l-5.8 5.2" stroke="#96121a" stroke-width="1.9" fill="none"/>
<path d="M80.7 497.6 l5.8 5.2 M86.5 497.6 l-5.8 5.2" stroke="#96121a" stroke-width="1.9" fill="none"/>
<path d="M74.8 511.0 l5.8 5.2 M80.6 511.0 l-5.8 5.2" stroke="#96121a" stroke-width="1.9" fill="none"/>
<path d="M160.1 521.3 l5.8 5.2 M165.9 521.3 l-5.8 5.2" stroke="#96121a" stroke-width="1.9" fill="none"/>
<path d="M236.7 526.8 l5.8 5.2 M242.5 526.8 l-5.8 5.2" stroke="#96121a" stroke-width="1.9" fill="none"/>
<path d="M308.6 498.5 l5.8 5.2 M314.4 498.5 l-5.8 5.2" stroke="#96121a" stroke-width="1.9" fill="none"/>
<path d="M346.3 498.5 l5.8 5.2 M352.1 498.5 l-5.8 5.2" stroke="#96121a" stroke-width="1.9" fill="none"/>
<path d="M325.1 537.3 l5.8 5.2 M330.9 537.3 l-5.8 5.2" stroke="#96121a" stroke-width="1.9" fill="none"/>
<line x1="355.4" y1="372" x2="355.4" y2="661" stroke="#fafafa" stroke-width="1.2"/>
<line x1="357.5" y1="371" x2="357.5" y2="661" stroke="#7c7c7c" stroke-width="2"/>
<rect x="358.5" y="372.2" width="308" height="288.6" fill="#f4f4f4"/>
<rect x="364" y="377.3" width="296.2" height="277.3" fill="#efefef" stroke="#dedede" stroke-width="0.8"/>
<line x1="364" y1="446.6" x2="660.2" y2="446.6" stroke="#d2d2d2" stroke-width="1"/>
<line x1="364" y1="516.3" x2="660.2" y2="516.3" stroke="#dcdcdc" stroke-width="1"/>
<rect x="364" y="517" width="296.2" height="3.9" fill="#f9f9f9"/>
<rect x="364" y="520.9" width="296.2" height="133.9" fill="#aaaee8"/>
<rect x="364" y="520.9" width="296.2" height="1.1" fill="#34348e" fill-opacity="1"/>
<rect x="364" y="532.0" width="296.2" height="0.9" fill="#8c90c8" fill-opacity="0.8"/>
<rect x="364" y="540.1" width="296.2" height="0.9" fill="#8c90c8" fill-opacity="0.8"/>
<rect x="364" y="544.9" width="296.2" height="0.9" fill="#8c90c8" fill-opacity="0.8"/>
<rect x="364" y="550.6" width="296.2" height="5.2" fill="#9498d0" fill-opacity="0.8"/>
<rect x="364" y="551.8" width="296.2" height="0.9" fill="#8286bc" fill-opacity="0.8"/>
<rect x="364" y="554.4" width="296.2" height="0.9" fill="#8286bc" fill-opacity="0.8"/>
<rect x="364" y="558.2" width="296.2" height="0.9" fill="#8286bc" fill-opacity="0.7"/>
<rect x="364" y="561.0" width="296.2" height="1.2" fill="#5e62a2" fill-opacity="1"/>
<rect x="364" y="569.9" width="296.2" height="2.9" fill="#8e96c2" fill-opacity="0.95"/>
<rect x="364" y="572.8" width="296.2" height="2.6" fill="#c4b0bc" fill-opacity="0.8"/>
<rect x="364" y="587.6" width="296.2" height="0.9" fill="#9094cc" fill-opacity="0.8"/>
<rect x="364" y="591.5" width="296.2" height="3.5" fill="#9296cc" fill-opacity="0.9"/>
<rect x="364" y="591.8" width="296.2" height="1.0" fill="#7c80b6" fill-opacity="0.9"/>
<rect x="364" y="603.6" width="296.2" height="8.1" fill="#9094c8" fill-opacity="0.9"/>
<rect x="364" y="605.3" width="296.2" height="0.9" fill="#8084ba" fill-opacity="0.8"/>
<rect x="364" y="607.8" width="296.2" height="0.9" fill="#8084ba" fill-opacity="0.8"/>
<rect x="364" y="609.8" width="296.2" height="1.3" fill="#6468a4" fill-opacity="1"/>
<rect x="364" y="611.7" width="296.2" height="10.3" fill="#9ea2da" fill-opacity="0.9"/>
<rect x="364" y="613.6" width="296.2" height="0.9" fill="#888cc2" fill-opacity="0.85"/>
<rect x="364" y="616.5" width="296.2" height="0.9" fill="#888cc2" fill-opacity="0.85"/>
<rect x="364" y="619.3" width="296.2" height="0.9" fill="#888cc2" fill-opacity="0.85"/>
<rect x="364" y="622.0" width="296.2" height="5.8" fill="#868abe" fill-opacity="0.95"/>
<rect x="364" y="624.0" width="296.2" height="0.9" fill="#7478ae" fill-opacity="0.8"/>
<rect x="364" y="626.3" width="296.2" height="0.9" fill="#7478ae" fill-opacity="0.8"/>
<rect x="364" y="627.8" width="296.2" height="9.8" fill="#a0a4dc" fill-opacity="0.9"/>
<rect x="364" y="630.3" width="296.2" height="0.9" fill="#8a8ec4" fill-opacity="0.85"/>
<rect x="364" y="633.6" width="296.2" height="0.9" fill="#8a8ec4" fill-opacity="0.85"/>
<rect x="364" y="636.6" width="296.2" height="0.9" fill="#9094ca" fill-opacity="0.8"/>
<rect x="364" y="642.8" width="296.2" height="6.3" fill="#8c90c4" fill-opacity="0.95"/>
<rect x="364" y="644.5" width="296.2" height="0.9" fill="#7c80b6" fill-opacity="0.8"/>
<rect x="364" y="646.8" width="296.2" height="1.4" fill="#52568e" fill-opacity="1"/>
<rect x="364" y="649.1" width="296.2" height="1.9" fill="#8e92c6" fill-opacity="0.95"/>
<rect x="364" y="575.4" width="296.2" height="1.7" fill="#f2d058"/>
<rect x="364" y="577" width="296.2" height="3" fill="#a00604"/>
<rect x="364" y="580" width="296.2" height="2.4" fill="#f2ba7a"/>
<line x1="667.2" y1="371" x2="667.2" y2="661" stroke="#e2e2e2" stroke-width="1"/>
<line x1="669.8" y1="371" x2="669.8" y2="661" stroke="#7c7c7c" stroke-width="1.8"/>
<rect x="670.7" y="372.2" width="310" height="288.6" fill="#f3f3f3"/>
<defs><clipPath id="lc"><rect x="670.7" y="372.2" width="310" height="288.4"/></clipPath></defs><g clip-path="url(#lc)">
<rect x="670.7" y="371.90" width="291.6" height="19.42" fill="#0b78d6"/>
<text x="673.7" y="385.38" font-size="10.5" letter-spacing="-0.17" fill="#ffffff">15776.0</text>
<clipPath id="p0"><rect x="742.9" y="375.68" width="206.6" height="12.6" rx="6.3"/></clipPath>
<g clip-path="url(#p0)"><rect x="742.9" y="375.68" width="206.6" height="12.6" fill="url(#gP)"/><rect x="784.1" y="375.68" width="121.8" height="12.6" fill="#a9da72"/></g>
<rect x="742.9" y="375.68" width="206.6" height="12.6" rx="6.3" fill="none" stroke="#22304c" stroke-width="1.6"/>
<rect x="670.7" y="391.27" width="291.6" height="19.42" fill="#f3f3f3"/>
<text x="673.7" y="404.75" font-size="10.5" letter-spacing="-0.17" fill="#2c2c2c">15776.0</text>
<clipPath id="p1"><rect x="742.9" y="395.05" width="206.6" height="12.6" rx="6.3"/></clipPath>
<g clip-path="url(#p1)"><rect x="742.9" y="395.05" width="206.6" height="12.6" fill="url(#gP)"/><rect x="784.1" y="395.05" width="121.8" height="12.6" fill="#a9da72"/></g>
<rect x="742.9" y="395.05" width="206.6" height="12.6" rx="6.3" fill="none" stroke="#484842" stroke-width="1.6"/>
<rect x="670.7" y="410.64" width="291.6" height="19.42" fill="#e0e0e0"/>
<text x="673.7" y="424.12" font-size="10.5" letter-spacing="-0.17" fill="#2c2c2c">15776.0</text>
<clipPath id="p2"><rect x="742.9" y="414.42" width="206.6" height="12.6" rx="6.3"/></clipPath>
<g clip-path="url(#p2)"><rect x="742.9" y="414.42" width="206.6" height="12.6" fill="url(#gP)"/><rect x="784.1" y="414.42" width="121.8" height="12.6" fill="#a9da72"/></g>
<rect x="742.9" y="414.42" width="206.6" height="12.6" rx="6.3" fill="none" stroke="#484842" stroke-width="1.6"/>
<rect x="670.7" y="430.01" width="291.6" height="19.42" fill="#f3f3f3"/>
<text x="673.7" y="443.49" font-size="10.5" letter-spacing="-0.17" fill="#2c2c2c">15777.0</text>
<clipPath id="p3"><rect x="742.9" y="433.79" width="206.6" height="12.6" rx="6.3"/></clipPath>
<g clip-path="url(#p3)"><rect x="742.9" y="433.79" width="206.6" height="12.6" fill="url(#gP)"/><rect x="772.8" y="433.79" width="145.0" height="12.6" fill="#caf59e"/></g>
<rect x="742.9" y="433.79" width="206.6" height="12.6" rx="6.3" fill="none" stroke="#484842" stroke-width="1.6"/>
<rect x="670.7" y="449.38" width="291.6" height="19.42" fill="#e0e0e0"/>
<text x="673.7" y="462.86" font-size="10.5" letter-spacing="-0.17" fill="#2c2c2c">15827.0</text>
<clipPath id="p4"><rect x="742.9" y="453.16" width="206.6" height="12.6" rx="6.3"/></clipPath>
<g clip-path="url(#p4)"><rect x="742.9" y="453.16" width="206.6" height="12.6" fill="url(#gP)"/><rect x="777.6" y="453.16" width="135.4" height="12.6" fill="#bbea8a"/></g>
<rect x="742.9" y="453.16" width="206.6" height="12.6" rx="6.3" fill="none" stroke="#484842" stroke-width="1.6"/>
<rect x="670.7" y="468.75" width="291.6" height="19.42" fill="#f3f3f3"/>
<text x="673.7" y="482.23" font-size="10.5" letter-spacing="-0.17" fill="#2c2c2c">15827.0</text>
<clipPath id="p5"><rect x="742.9" y="472.53" width="206.6" height="12.6" rx="6.3"/></clipPath>
<g clip-path="url(#p5)"><rect x="742.9" y="472.53" width="206.6" height="12.6" fill="url(#gP)"/><rect x="777.6" y="472.53" width="135.4" height="12.6" fill="#bbea8a"/></g>
<rect x="742.9" y="472.53" width="206.6" height="12.6" rx="6.3" fill="none" stroke="#484842" stroke-width="1.6"/>
<rect x="670.7" y="488.12" width="291.6" height="19.42" fill="#e0e0e0"/>
<text x="673.7" y="501.60" font-size="10.5" letter-spacing="-0.17" fill="#2c2c2c">15961.0</text>
<clipPath id="p6"><rect x="742.9" y="491.90" width="206.6" height="12.6" rx="6.3"/></clipPath>
<g clip-path="url(#p6)"><rect x="742.9" y="491.90" width="206.6" height="12.6" fill="url(#gP)"/><rect x="787.3" y="491.90" width="116.0" height="12.6" fill="#a9da72"/></g>
<rect x="742.9" y="491.90" width="206.6" height="12.6" rx="6.3" fill="none" stroke="#484842" stroke-width="1.6"/>
<rect x="670.7" y="507.49" width="291.6" height="19.42" fill="#f3f3f3"/>
<text x="673.7" y="520.97" font-size="10.5" letter-spacing="-0.17" fill="#2c2c2c">15961.0</text>
<clipPath id="p7"><rect x="742.9" y="511.27" width="206.6" height="12.6" rx="6.3"/></clipPath>
<g clip-path="url(#p7)"><rect x="742.9" y="511.27" width="206.6" height="12.6" fill="url(#gP)"/><rect x="787.3" y="511.27" width="116.0" height="12.6" fill="#a9da72"/></g>
<rect x="742.9" y="511.27" width="206.6" height="12.6" rx="6.3" fill="none" stroke="#484842" stroke-width="1.6"/>
<rect x="670.7" y="526.86" width="291.6" height="19.42" fill="#e0e0e0"/>
<text x="673.7" y="540.34" font-size="10.5" letter-spacing="-0.17" fill="#2c2c2c">15961.0</text>
<clipPath id="p8"><rect x="742.9" y="530.64" width="206.6" height="12.6" rx="6.3"/></clipPath>
<g clip-path="url(#p8)"><rect x="742.9" y="530.64" width="206.6" height="12.6" fill="url(#gP)"/><rect x="787.3" y="530.64" width="116.0" height="12.6" fill="#a9da72"/></g>
<rect x="742.9" y="530.64" width="206.6" height="12.6" rx="6.3" fill="none" stroke="#484842" stroke-width="1.6"/>
<rect x="670.7" y="546.23" width="291.6" height="19.42" fill="#f3f3f3"/>
<text x="673.7" y="559.71" font-size="10.5" letter-spacing="-0.17" fill="#2c2c2c">15964.0</text>
<clipPath id="p9"><rect x="742.9" y="550.01" width="206.6" height="12.6" rx="6.3"/></clipPath>
<g clip-path="url(#p9)"><rect x="742.9" y="550.01" width="206.6" height="12.6" fill="url(#gP)"/><rect x="776.7" y="550.01" width="137.3" height="12.6" fill="#bbea8a"/></g>
<rect x="742.9" y="550.01" width="206.6" height="12.6" rx="6.3" fill="none" stroke="#484842" stroke-width="1.6"/>
<rect x="670.7" y="565.60" width="291.6" height="19.42" fill="#e0e0e0"/>
<text x="673.7" y="579.08" font-size="10.5" letter-spacing="-0.17" fill="#2c2c2c">15973.0</text>
<clipPath id="p10"><rect x="742.9" y="569.38" width="206.6" height="12.6" rx="6.3"/></clipPath>
<g clip-path="url(#p10)"><rect x="742.9" y="569.38" width="206.6" height="12.6" fill="url(#gP)"/><rect x="772.8" y="569.38" width="145.0" height="12.6" fill="#caf59e"/></g>
<rect x="742.9" y="569.38" width="206.6" height="12.6" rx="6.3" fill="none" stroke="#484842" stroke-width="1.6"/>
<rect x="670.7" y="584.97" width="291.6" height="19.42" fill="#f3f3f3"/>
<text x="673.7" y="598.45" font-size="10.5" letter-spacing="-0.17" fill="#2c2c2c">15977.0</text>
<clipPath id="p11"><rect x="742.9" y="588.75" width="206.6" height="12.6" rx="6.3"/></clipPath>
<g clip-path="url(#p11)"><rect x="742.9" y="588.75" width="206.6" height="12.6" fill="url(#gP)"/><rect x="784.1" y="588.75" width="122.4" height="12.6" fill="#a9da72"/></g>
<rect x="742.9" y="588.75" width="206.6" height="12.6" rx="6.3" fill="none" stroke="#484842" stroke-width="1.6"/>
<rect x="670.7" y="604.34" width="291.6" height="19.42" fill="#e0e0e0"/>
<text x="673.7" y="617.82" font-size="10.5" letter-spacing="-0.17" fill="#2c2c2c">15994.0</text>
<clipPath id="p12"><rect x="742.9" y="608.12" width="206.6" height="12.6" rx="6.3"/></clipPath>
<g clip-path="url(#p12)"><rect x="742.9" y="608.12" width="206.6" height="12.6" fill="url(#gP)"/><rect x="776.7" y="608.12" width="137.3" height="12.6" fill="#bbea8a"/></g>
<rect x="742.9" y="608.12" width="206.6" height="12.6" rx="6.3" fill="none" stroke="#484842" stroke-width="1.6"/>
<rect x="670.7" y="623.71" width="291.6" height="19.42" fill="#f3f3f3"/>
<text x="673.7" y="637.19" font-size="10.5" letter-spacing="-0.17" fill="#2c2c2c">16008.0</text>
<clipPath id="p13"><rect x="742.9" y="627.50" width="206.6" height="12.6" rx="6.3"/></clipPath>
<g clip-path="url(#p13)"><rect x="742.9" y="627.50" width="206.6" height="12.6" fill="url(#gP)"/><rect x="786.3" y="627.50" width="118.0" height="12.6" fill="#a9da72"/></g>
<rect x="742.9" y="627.50" width="206.6" height="12.6" rx="6.3" fill="none" stroke="#484842" stroke-width="1.6"/>
<rect x="670.7" y="643.08" width="291.6" height="19.42" fill="#e0e0e0"/>
<text x="673.7" y="656.56" font-size="10.5" letter-spacing="-0.17" fill="#2c2c2c">16016.0</text>
<clipPath id="p14"><rect x="742.9" y="646.86" width="206.6" height="12.6" rx="6.3"/></clipPath>
<g clip-path="url(#p14)"><rect x="742.9" y="646.86" width="206.6" height="12.6" fill="url(#gP)"/><rect x="769.6" y="646.86" width="152.1" height="12.6" fill="#d0f9a4"/></g>
<rect x="742.9" y="646.86" width="206.6" height="12.6" rx="6.3" fill="none" stroke="#484842" stroke-width="1.6"/>
</g>
<rect x="970.4" y="387" width="2" height="75.6" fill="#6a6a6a"/>
</svg></body></html>
